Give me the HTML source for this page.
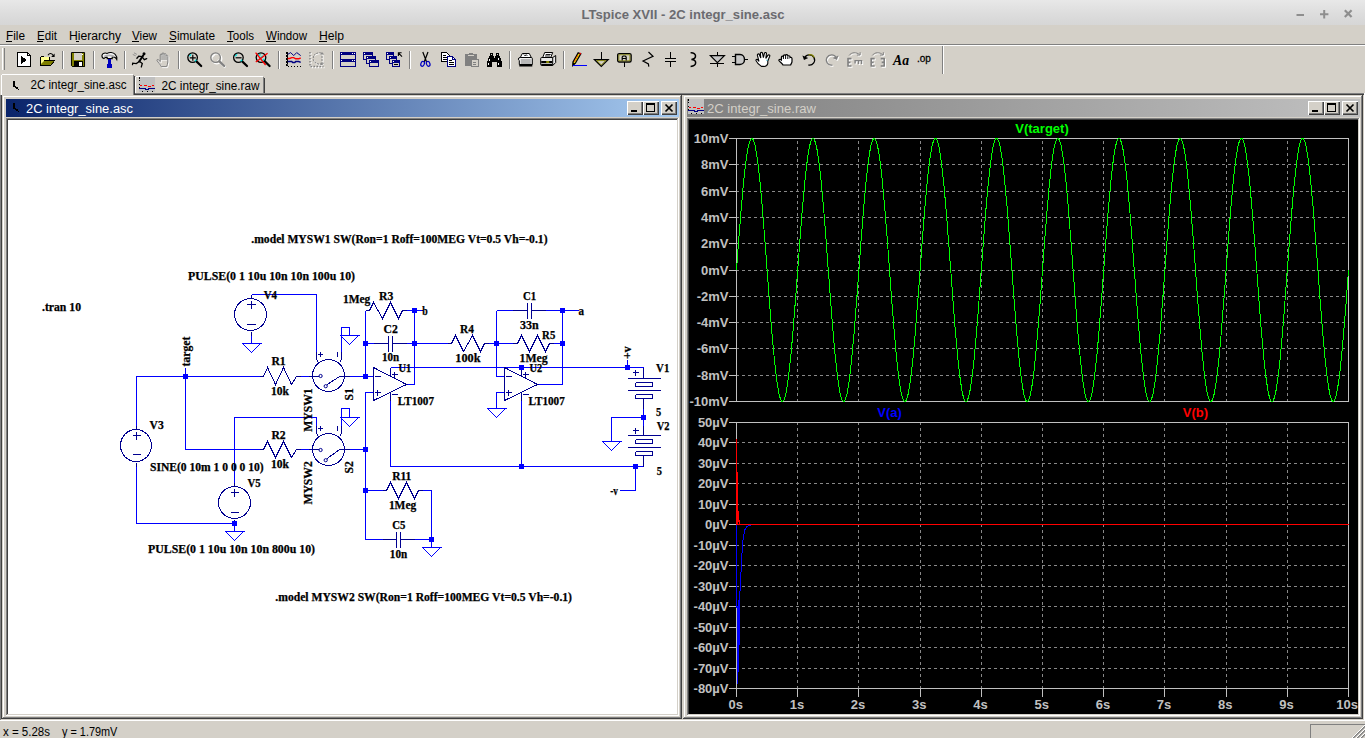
<!DOCTYPE html>
<html><head><meta charset="utf-8"><title>LTspice XVII - 2C integr_sine.asc</title>
<style>
html,body{margin:0;padding:0;}
body{width:1365px;height:738px;overflow:hidden;background:#d4d0c8;font-family:"Liberation Sans",sans-serif;position:relative;}
.abs{position:absolute;}
svg{display:block;overflow:visible;}
</style></head><body>
<div class="abs" style="left:0;top:0;width:1365px;height:25px;background:linear-gradient(#e8e8e8,#e3e3e3 25%,#dcdcdc 60%,#d6d6d6);"></div>
<svg class="abs" style="left:0;top:0" width="1365" height="25"><text x="581.5" y="18.6" font-family="Liberation Sans, sans-serif" font-weight="bold" font-size="13.2" fill="#6b6b70" textLength="203" lengthAdjust="spacingAndGlyphs">LTspice XVII - 2C integr_sine.asc</text><g stroke="#8e8e8e" stroke-width="2" fill="none"><path d="M1296.5 15h7.5"/><path d="M1320 14.2h8.4M1324.2 10v8.4"/><path d="M1344.8 10.2l6.8 6.8M1351.6 10.2l-6.8 6.8" stroke-width="2.2"/></g></svg>
<svg class="abs" style="left:0;top:25px" width="1365" height="20" font-family="Liberation Sans, sans-serif" font-size="12" fill="#000">
<text x="6" y="14.8" textLength="19" lengthAdjust="spacingAndGlyphs">File</text>
<text x="37" y="14.8" textLength="20" lengthAdjust="spacingAndGlyphs">Edit</text>
<text x="69" y="14.8" textLength="52" lengthAdjust="spacingAndGlyphs">Hierarchy</text>
<text x="132" y="14.8" textLength="25" lengthAdjust="spacingAndGlyphs">View</text>
<text x="169" y="14.8" textLength="46" lengthAdjust="spacingAndGlyphs">Simulate</text>
<text x="227" y="14.8" textLength="27" lengthAdjust="spacingAndGlyphs">Tools</text>
<text x="266" y="14.8" textLength="41" lengthAdjust="spacingAndGlyphs">Window</text>
<text x="319" y="14.8" textLength="25" lengthAdjust="spacingAndGlyphs">Help</text>
<rect x="6" y="16" width="6" height="1" fill="#000"/>
<rect x="37" y="16" width="6" height="1" fill="#000"/>
<rect x="76" y="16" width="3" height="1" fill="#000"/>
<rect x="132" y="16" width="7" height="1" fill="#000"/>
<rect x="169" y="16" width="7" height="1" fill="#000"/>
<rect x="227" y="16" width="6" height="1" fill="#000"/>
<rect x="266" y="16" width="10" height="1" fill="#000"/>
<rect x="319" y="16" width="8" height="1" fill="#000"/>
</svg>
<div class="abs" style="left:0px;top:44px;width:1365px;height:1px;background:#808080;"></div>
<div class="abs" style="left:0px;top:45px;width:1365px;height:1px;background:#ffffff;"></div>
<div class="abs" style="left:2px;top:48px;width:1px;height:22px;background:#ffffff;"></div>
<div class="abs" style="left:3px;top:48px;width:1px;height:22px;background:#d4d0c8;"></div>
<div class="abs" style="left:4px;top:48px;width:1px;height:22px;background:#808080;"></div>
<div class="abs" style="left:942px;top:46px;width:1px;height:28px;background:#808080;"></div>
<div class="abs" style="left:943px;top:46px;width:1px;height:28px;background:#ffffff;"></div>
<div class="abs" style="left:1px;top:74px;width:134px;height:21px;background:#d4d0c8;"></div>
<div class="abs" style="left:2px;top:74px;width:131px;height:1px;background:#fff;"></div>
<div class="abs" style="left:1px;top:75px;width:1px;height:20px;background:#fff;"></div>
<div class="abs" style="left:133px;top:75px;width:1px;height:20px;background:#808080;"></div>
<div class="abs" style="left:134px;top:76px;width:1px;height:19px;background:#404040;"></div>
<div class="abs" style="left:136px;top:76px;width:127px;height:1px;background:#fff;"></div>
<div class="abs" style="left:135px;top:77px;width:1px;height:16px;background:#fff;"></div>
<div class="abs" style="left:263px;top:77px;width:1px;height:16px;background:#808080;"></div>
<div class="abs" style="left:264px;top:78px;width:1px;height:15px;background:#404040;"></div>
<svg class="abs" style="left:0;top:70px" width="300" height="28" font-family="Liberation Sans, sans-serif" font-size="12" fill="#000"><text x="30.5" y="18.6" textLength="96" lengthAdjust="spacingAndGlyphs">2C integr_sine.asc</text><text x="161.5" y="19.8" textLength="98" lengthAdjust="spacingAndGlyphs">2C integr_sine.raw</text></svg>
<div class="abs" style="left:135px;top:93px;width:1230px;height:1px;background:#808080;"></div>
<div class="abs" style="left:135px;top:94px;width:1229px;height:1px;background:#404040;"></div>
<div class="abs" style="left:0px;top:95px;width:1px;height:626px;background:#808080;"></div>
<div class="abs" style="left:1px;top:95px;width:1px;height:625px;background:#404040;"></div>
<div class="abs" style="left:1364px;top:93px;width:1px;height:628px;background:#fff;"></div>
<div class="abs" style="left:1363px;top:95px;width:1px;height:625px;background:#d4d0c8;"></div>
<div class="abs" style="left:0px;top:720px;width:1365px;height:1px;background:#fff;"></div>
<div class="abs" style="left:1px;top:719px;width:1363px;height:1px;background:#d4d0c8;"></div>
<div class="abs" style="left:2px;top:95px;width:680px;height:624px;background:#d4d0c8;"></div>
<div class="abs" style="left:2px;top:95px;width:679px;height:1px;background:#d4d0c8;"></div>
<div class="abs" style="left:2px;top:95px;width:1px;height:623px;background:#d4d0c8;"></div>
<div class="abs" style="left:2px;top:718px;width:680px;height:1px;background:#404040;"></div>
<div class="abs" style="left:681px;top:95px;width:1px;height:624px;background:#404040;"></div>
<div class="abs" style="left:3px;top:96px;width:677px;height:1px;background:#fff;"></div>
<div class="abs" style="left:3px;top:96px;width:1px;height:621px;background:#fff;"></div>
<div class="abs" style="left:3px;top:717px;width:678px;height:1px;background:#808080;"></div>
<div class="abs" style="left:680px;top:96px;width:1px;height:622px;background:#808080;"></div>
<div class="abs" style="left:6px;top:99px;width:673px;height:18px;background:linear-gradient(90deg,#0a246a,#a6caf0);"></div>
<div class="abs" style="left:6px;top:118px;width:673px;height:598px;background:#fff;"></div>
<div class="abs" style="left:6px;top:118px;width:673px;height:1px;background:#808080;"></div>
<div class="abs" style="left:6px;top:118px;width:1px;height:598px;background:#808080;"></div>
<div class="abs" style="left:7px;top:119px;width:671px;height:1px;background:#404040;"></div>
<div class="abs" style="left:7px;top:119px;width:1px;height:596px;background:#404040;"></div>
<div class="abs" style="left:6px;top:715px;width:673px;height:1px;background:#fff;"></div>
<div class="abs" style="left:678px;top:118px;width:1px;height:598px;background:#fff;"></div>
<div class="abs" style="left:7px;top:714px;width:671px;height:1px;background:#d4d0c8;"></div>
<div class="abs" style="left:677px;top:119px;width:1px;height:596px;background:#d4d0c8;"></div>
<div class="abs" style="left:661px;top:101px;width:16px;height:14px;background:#d4d0c8;box-shadow:inset 1px 1px 0 #fff, inset -1px -1px 0 #404040, inset -2px -2px 0 #808080;"></div>
<svg class="abs" style="left:661px;top:101px" width="16" height="14"><path d="M4.5 3.5l7 7M11.5 3.5l-7 7" stroke="#000" stroke-width="1.7" fill="none"/></svg>
<div class="abs" style="left:643px;top:101px;width:16px;height:14px;background:#d4d0c8;box-shadow:inset 1px 1px 0 #fff, inset -1px -1px 0 #404040, inset -2px -2px 0 #808080;"></div>
<div class="abs" style="left:646px;top:103px;width:7px;height:6px;border:1px solid #000;border-top-width:2px;"></div>
<div class="abs" style="left:627px;top:101px;width:16px;height:14px;background:#d4d0c8;box-shadow:inset 1px 1px 0 #fff, inset -1px -1px 0 #404040, inset -2px -2px 0 #808080;"></div>
<div class="abs" style="left:631px;top:110px;width:6px;height:2px;background:#000;"></div>
<div class="abs" style="left:683px;top:95px;width:680px;height:624px;background:#d4d0c8;"></div>
<div class="abs" style="left:683px;top:95px;width:679px;height:1px;background:#d4d0c8;"></div>
<div class="abs" style="left:683px;top:95px;width:1px;height:623px;background:#d4d0c8;"></div>
<div class="abs" style="left:683px;top:718px;width:680px;height:1px;background:#404040;"></div>
<div class="abs" style="left:1362px;top:95px;width:1px;height:624px;background:#404040;"></div>
<div class="abs" style="left:684px;top:96px;width:677px;height:1px;background:#fff;"></div>
<div class="abs" style="left:684px;top:96px;width:1px;height:621px;background:#fff;"></div>
<div class="abs" style="left:684px;top:717px;width:678px;height:1px;background:#808080;"></div>
<div class="abs" style="left:1361px;top:96px;width:1px;height:622px;background:#808080;"></div>
<div class="abs" style="left:687px;top:99px;width:673px;height:18px;background:linear-gradient(90deg,#808080,#c0c0c0);"></div>
<div class="abs" style="left:687px;top:118px;width:673px;height:598px;background:#000;"></div>
<div class="abs" style="left:687px;top:118px;width:673px;height:1px;background:#808080;"></div>
<div class="abs" style="left:687px;top:118px;width:1px;height:598px;background:#808080;"></div>
<div class="abs" style="left:688px;top:119px;width:671px;height:1px;background:#404040;"></div>
<div class="abs" style="left:688px;top:119px;width:1px;height:596px;background:#404040;"></div>
<div class="abs" style="left:687px;top:715px;width:673px;height:1px;background:#fff;"></div>
<div class="abs" style="left:1359px;top:118px;width:1px;height:598px;background:#fff;"></div>
<div class="abs" style="left:688px;top:714px;width:671px;height:1px;background:#d4d0c8;"></div>
<div class="abs" style="left:1358px;top:119px;width:1px;height:596px;background:#d4d0c8;"></div>
<div class="abs" style="left:1342px;top:101px;width:16px;height:14px;background:#d4d0c8;box-shadow:inset 1px 1px 0 #fff, inset -1px -1px 0 #404040, inset -2px -2px 0 #808080;"></div>
<svg class="abs" style="left:1342px;top:101px" width="16" height="14"><path d="M4.5 3.5l7 7M11.5 3.5l-7 7" stroke="#000" stroke-width="1.7" fill="none"/></svg>
<div class="abs" style="left:1324px;top:101px;width:16px;height:14px;background:#d4d0c8;box-shadow:inset 1px 1px 0 #fff, inset -1px -1px 0 #404040, inset -2px -2px 0 #808080;"></div>
<div class="abs" style="left:1327px;top:103px;width:7px;height:6px;border:1px solid #000;border-top-width:2px;"></div>
<div class="abs" style="left:1308px;top:101px;width:16px;height:14px;background:#d4d0c8;box-shadow:inset 1px 1px 0 #fff, inset -1px -1px 0 #404040, inset -2px -2px 0 #808080;"></div>
<div class="abs" style="left:1312px;top:110px;width:6px;height:2px;background:#000;"></div>
<svg class="abs" style="left:0;top:95px" width="1365" height="30" font-family="Liberation Sans, sans-serif" font-size="12"><text x="26" y="17.8" fill="#fff" textLength="107" lengthAdjust="spacingAndGlyphs">2C integr_sine.asc</text><text x="707" y="17.8" fill="#d4d0c8" textLength="109" lengthAdjust="spacingAndGlyphs">2C integr_sine.raw</text></svg>
<svg class="abs" style="left:0;top:721px" width="1365" height="17" font-family="Liberation Sans, sans-serif" font-size="12" fill="#000"><text x="3" y="15.3" textLength="47" lengthAdjust="spacingAndGlyphs">x = 5.28s</text><text x="62" y="15.3" textLength="55.3" lengthAdjust="spacingAndGlyphs">y = 1.79mV</text></svg>
<div class="abs" style="left:1310px;top:724px;width:55px;height:1px;background:#808080;"></div>
<div class="abs" style="left:1310px;top:724px;width:1px;height:14px;background:#808080;"></div>
<svg class="abs" style="left:1349px;top:722px" width="16" height="16"><g stroke-width="1"><path d="M4 16L16 4M8 16L16 8M12 16L16 12" stroke="#808080" stroke-width="1.6" fill="none"/><path d="M3 16L16 3M7 16L16 7M11 16L16 11" stroke="#fff" stroke-width="1" fill="none"/></g></svg>
<div class="abs" style="left:62px;top:51px;width:1px;height:18px;background:#808080"></div><div class="abs" style="left:63px;top:51px;width:1px;height:18px;background:#fff"></div>
<div class="abs" style="left:93px;top:51px;width:1px;height:18px;background:#808080"></div><div class="abs" style="left:94px;top:51px;width:1px;height:18px;background:#fff"></div>
<div class="abs" style="left:124px;top:51px;width:1px;height:18px;background:#808080"></div><div class="abs" style="left:125px;top:51px;width:1px;height:18px;background:#fff"></div>
<div class="abs" style="left:178px;top:51px;width:1px;height:18px;background:#808080"></div><div class="abs" style="left:179px;top:51px;width:1px;height:18px;background:#fff"></div>
<div class="abs" style="left:278px;top:51px;width:1px;height:18px;background:#808080"></div><div class="abs" style="left:279px;top:51px;width:1px;height:18px;background:#fff"></div>
<div class="abs" style="left:332px;top:51px;width:1px;height:18px;background:#808080"></div><div class="abs" style="left:333px;top:51px;width:1px;height:18px;background:#fff"></div>
<div class="abs" style="left:409px;top:51px;width:1px;height:18px;background:#808080"></div><div class="abs" style="left:410px;top:51px;width:1px;height:18px;background:#fff"></div>
<div class="abs" style="left:509px;top:51px;width:1px;height:18px;background:#808080"></div><div class="abs" style="left:510px;top:51px;width:1px;height:18px;background:#fff"></div>
<div class="abs" style="left:563px;top:51px;width:1px;height:18px;background:#808080"></div><div class="abs" style="left:564px;top:51px;width:1px;height:18px;background:#fff"></div>
<svg class="abs" style="left:0;top:0" width="960" height="74">
<g transform="translate(17,52)"><g shape-rendering="crispEdges"><path d="M0.5 0.5H10.5L13.5 3.5V14.5H0.5Z" fill="#fff" stroke="#000"/><path d="M10.5 0.5V3.5H13.5" fill="none" stroke="#000"/><path d="M4 4V12L10 8Z" fill="#000"/></g></g>
<g transform="translate(40,52)"><g><path d="M0.5 4.5H3.5L4.5 5.5H9.5V8" fill="#ffff80" stroke="#000" stroke-width="1" shape-rendering="crispEdges"/><rect x="1" y="5" width="8" height="7" fill="#ffff90" shape-rendering="crispEdges"/><path d="M3.5 8.5H14.5L10.5 13.5H0.5V5" fill="none" stroke="#000" shape-rendering="crispEdges"/><path d="M4 9H14L10.3 13H1V12Z" fill="#808000"/><path d="M0.5 4.5V13.5" stroke="#000" shape-rendering="crispEdges"/><path d="M8 3.2C9.5 0.8 12 0.8 13.2 3.6" fill="none" stroke="#000" stroke-width="1.1"/><path d="M14.6 1.6V5H11.2Z" fill="#000"/></g></g>
<g transform="translate(71,52)"><g shape-rendering="crispEdges" transform="scale(0.935,1)"><path d="M0.5 0.5H14.5V14.5H1.5L0.5 13.5Z" fill="#808000" stroke="#000"/><rect x="3" y="1" width="9" height="7" fill="#d4d0c8"/><rect x="12" y="2" width="1" height="1" fill="#fff"/><rect x="3" y="9" width="10" height="6" fill="#000"/><rect x="9" y="10" width="3" height="4" fill="#fff"/></g></g>
<g transform="translate(101.2,52)"><g><path d="M0.8 3.2C1.5 1 4 0.6 6 1.4C8 0 12 0 14 2.4C15.4 4 15.8 6 15.6 7.4C14.6 5.4 13 4.6 11 5V6.6H6V5.2C4.6 5 3.6 5.6 2.6 6.6C1.6 6.2 0.6 4.8 0.8 3.2Z" fill="#f4f4f4" stroke="#000" stroke-width="1.1"/><path d="M3 3.6C6 2 10 2 13 3.6L13 5C10 4 6 4 3 5Z" fill="#b0b0b0"/><rect x="6.5" y="7" width="3.2" height="8.5" fill="#0000c0" shape-rendering="crispEdges"/><rect x="5.6" y="12" width="5" height="3.5" fill="#0000c0" shape-rendering="crispEdges"/></g></g>
<g transform="translate(131.7,52)"><g stroke="#000" fill="none" stroke-linecap="round"><circle cx="12.3" cy="1.8" r="1.5" fill="#000" stroke="none"/><path d="M11.5 3.5L7.5 9.5" stroke-width="2.1"/><path d="M10.8 4.6L7 4.2L5.2 6.2" stroke-width="1.3"/><path d="M10.6 5.2L12.6 7.6L15 6.6" stroke-width="1.3"/><path d="M7.6 9.4L4.6 11.6L1 11.2L0.8 12.6" stroke-width="1.25"/><path d="M8 9.6L10.6 11.4L9.6 15" stroke-width="1.25"/><path d="M1.4 2.6L3.6 3.6M2.6 1L4.8 2.2" stroke="#808080" stroke-width="0.8"/></g></g>
<g transform="translate(155.6,52)"><g fill="none"><path d="M4.6 9.6V3C4.6 1.6 6.4 1.6 6.4 3V2C6.4 0.4 8.4 0.4 8.4 2V2.6C8.4 1.2 10.4 1.2 10.4 2.6V4C10.4 2.8 12.2 2.8 12.2 4.2V10C12.2 12 11.4 13 11 14.6H5.6C5 12.6 2.6 10.6 1.4 8.6C1 7.6 2.2 7 3 7.8Z" stroke="#fff" stroke-width="1" transform="translate(1,1)"/><path d="M6.4 3V8M8.4 2.6V8M10.4 4V8" stroke="#fff" transform="translate(1,1)"/><path d="M4.6 9.6V3C4.6 1.6 6.4 1.6 6.4 3V2C6.4 0.4 8.4 0.4 8.4 2V2.6C8.4 1.2 10.4 1.2 10.4 2.6V4C10.4 2.8 12.2 2.8 12.2 4.2V10C12.2 12 11.4 13 11 14.6H5.6C5 12.6 2.6 10.6 1.4 8.6C1 7.6 2.2 7 3 7.8Z" stroke="#808080" stroke-width="1"/><path d="M6.4 3V8M8.4 2.6V8M10.4 4V8" stroke="#808080"/></g></g>
<g transform="translate(186.8,52)"><g><circle cx="5.8" cy="5.6" r="4.8" fill="none" stroke="#000" stroke-width="1.3"/><path d="M9.6 9.4L14.4 14" stroke="#000" stroke-width="2.2" stroke-linecap="round"/><path d="M2.6 4.2L4.4 2.4M8 9.4L9.6 7.8" stroke="#00e0e0" stroke-width="1.3"/><path d="M3 5.8H9M6 2.8V8.8" stroke="#000" stroke-width="1.2"/></g></g>
<g transform="translate(209.8,52)"><g><g transform="translate(1,1)"><circle cx="6" cy="5.8" r="5" fill="none" stroke="#fff" stroke-width="1.3"/><path d="M10 10L14.6 14.4" stroke="#fff" stroke-width="2.2"/></g><circle cx="5.8" cy="5.6" r="4.8" fill="none" stroke="#808080" stroke-width="1.3"/><path d="M9.6 9.4L14.4 14" stroke="#808080" stroke-width="2.2" stroke-linecap="round"/><path d="M3.4 4.6L5 3M7.6 8.8L9 7.4" stroke="#fff" stroke-width="1"/></g></g>
<g transform="translate(232.6,52)"><g><circle cx="5.8" cy="5.6" r="4.8" fill="none" stroke="#000" stroke-width="1.3"/><path d="M9.6 9.4L14.4 14" stroke="#000" stroke-width="2.2" stroke-linecap="round"/><path d="M2.6 4.2L4.4 2.4M8 9.4L9.6 7.8" stroke="#00e0e0" stroke-width="1.3"/><path d="M3 5.8H9" stroke="#000" stroke-width="1.2"/></g></g>
<g transform="translate(255.2,52)"><g><circle cx="5.8" cy="5.6" r="4.8" fill="none" stroke="#000" stroke-width="1.3"/><path d="M9.6 9.4L14.4 14" stroke="#000" stroke-width="2.2" stroke-linecap="round"/><path d="M3.4 3.6L5.4 2.4M6.6 9.2L9.2 7.2M4 7L8 4" stroke="#00e0e0" stroke-width="1.6"/><path d="M0.4 0.6L10.4 13M12.4 1.2L0.6 10" stroke="#ff0000" stroke-width="1.3"/></g></g>
<g transform="translate(285.7,52)"><g fill="none"><path d="M1.5 0V14.5H15.5" stroke="#000" stroke-width="1.6" stroke-dasharray="1.6 1.4" shape-rendering="crispEdges"/><path d="M1.5 0V14" stroke="#000" stroke-width="1" shape-rendering="crispEdges"/><path d="M2 2.4L5 0.6L8 3.6L11 0.6L15 3.6" stroke="#000080" stroke-width="1"/><path d="M2 6.5H4L6 5.6H8L10 6.8H13L15 6" stroke="#ff0000" stroke-width="1.4"/><path d="M2 9.5H6L7 10.6H9L10 9.6H13L15 10.4" stroke="#000080" stroke-width="1.5"/><path d="M2 12.5H15" stroke="#d4d0c8"/></g></g>
<g transform="translate(308.5,52)"><g fill="none"><g transform="translate(1,1)" stroke="#fff"><path d="M1.5 0V14.5H15" stroke-width="1.4" stroke-dasharray="1.6 1.4"/><path d="M5 3C8 0 13 0.4 13.5 2M13.5 2V12C10 13 5 11 4.6 7" stroke-width="1"/></g><path d="M1.5 0V14.5H15" stroke="#808080" stroke-width="1.4" stroke-dasharray="1.6 1.4"/><path d="M5.4 3.4C8 0.4 12 0.2 13.5 1.6M13.5 1V12.6M13.5 12C10 13 5.4 11 4.8 7.4C4.6 5.6 5 4.4 5.4 3.4" stroke="#808080" stroke-width="1" stroke-dasharray="2 1"/><path d="M12 2.4L13.5 0.6L15 2.4M12 10.8L13.5 12.8L15 10.8" stroke="#808080"/></g></g>
<g transform="translate(340,52)"><g shape-rendering="crispEdges"><rect x="0.5" y="0.5" width="15" height="7" fill="#d4d0c8" stroke="#000080"/><rect x="0" y="0" width="16" height="3" fill="#000080"/><rect x="0.5" y="7.5" width="15" height="7" fill="#d4d0c8" stroke="#000080"/><rect x="0" y="7" width="16" height="3" fill="#000080"/><rect x="1" y="1" width="1" height="1" fill="#fff"/><rect x="12" y="1" width="1" height="1" fill="#fff"/><rect x="14" y="1" width="1" height="1" fill="#fff"/><rect x="1" y="8" width="1" height="1" fill="#fff"/><rect x="12" y="8" width="1" height="1" fill="#fff"/><rect x="14" y="8" width="1" height="1" fill="#fff"/></g></g>
<g transform="translate(363,52)"><g shape-rendering="crispEdges"><rect x="0.5" y="0.5" width="9" height="7" fill="#d4d0c8" stroke="#000080"/><rect x="0" y="0" width="10" height="3" fill="#000080"/><rect x="1" y="1" width="1" height="1" fill="#fff"/><rect x="3.5" y="4.5" width="9" height="7" fill="#d4d0c8" stroke="#000080"/><rect x="3" y="4" width="10" height="3" fill="#000080"/><rect x="4" y="5" width="1" height="1" fill="#fff"/><rect x="6.5" y="8.5" width="9" height="6" fill="#d4d0c8" stroke="#000080"/><rect x="6" y="8" width="10" height="3" fill="#000080"/><rect x="7" y="9" width="1" height="1" fill="#fff"/></g></g>
<g transform="translate(386,52)"><g shape-rendering="crispEdges"><rect x="0.5" y="0.5" width="7" height="7" fill="#d4d0c8" stroke="#000080"/><rect x="0" y="0" width="8" height="3" fill="#000080"/><rect x="1" y="1" width="1" height="1" fill="#fff"/><rect x="3.5" y="4.5" width="7" height="7" fill="#d4d0c8" stroke="#000080"/><rect x="3" y="4" width="8" height="3" fill="#000080"/><rect x="4" y="5" width="1" height="1" fill="#fff"/><rect x="6.5" y="8.5" width="7" height="6" fill="#d4d0c8" stroke="#000080"/><rect x="6" y="8" width="8" height="3" fill="#000080"/><rect x="7" y="9" width="1" height="1" fill="#fff"/><rect x="8" y="12" width="4" height="1" fill="#000"/></g><path d="M15.6 0.8H12.4V4M12.4 0.8L16 4.6" stroke="#000" fill="none" stroke-width="1.1"/></g>
<g transform="translate(417,52)"><g fill="none"><path d="M5.8 0L9.6 10M11 0L7.2 10" stroke="#000" stroke-width="1.2"/><ellipse cx="5.6" cy="11.8" rx="1.7" ry="2.5" transform="rotate(20 5.6 11.8)" stroke="#0000c0" stroke-width="1.2"/><ellipse cx="11.2" cy="11.8" rx="1.7" ry="2.5" transform="rotate(-20 11.2 11.8)" stroke="#0000c0" stroke-width="1.2"/></g></g>
<g transform="translate(441,52)"><g shape-rendering="crispEdges"><path d="M0.5 0.5H5.5L8.5 3.5V9.5H0.5Z" fill="#fff" stroke="#000"/><path d="M2 3H5M2 5H7M2 7H7" stroke="#000"/><path d="M6.5 4.5H11.5L14.5 7.5V14.5H6.5Z" fill="#fff" stroke="#000080"/><path d="M11.5 4.5V7.5H14.5" fill="none" stroke="#000080"/><path d="M8 8H11M8 10H13M8 12H13" stroke="#000"/></g></g>
<g transform="translate(464,52)"><g shape-rendering="crispEdges"><rect x="1" y="2" width="12" height="12" rx="1.5" fill="#808080"/><rect x="5" y="0.5" width="4" height="3" fill="#808080"/><rect x="4" y="3" width="6" height="1" fill="#d4d0c8"/><rect x="7.5" y="7.5" width="7" height="7" fill="#d4d0c8" stroke="#fff"/><rect x="7" y="7" width="7" height="7" fill="none" stroke="#808080"/><path d="M9 10H12M9 12H12" stroke="#808080"/></g></g>
<g transform="translate(487,52)"><g fill="#000" shape-rendering="crispEdges"><rect x="3" y="1" width="3" height="3"/><rect x="9" y="1" width="3" height="3"/><rect x="4" y="2" width="1" height="1" fill="#d4d0c8"/><rect x="10" y="2" width="1" height="1" fill="#d4d0c8"/><path d="M2.5 4H6.5L7 7H8L8.5 4H12.5L15 10V14.5H10V10H5V14.5H0V10Z"/><rect x="6" y="6" width="3" height="4"/><rect x="1" y="11" width="1" height="2" fill="#fff"/><rect x="2" y="7" width="1" height="2" fill="#fff"/><rect x="11" y="11" width="1" height="2" fill="#fff"/><rect x="11" y="6" width="1" height="2" fill="#fff"/></g></g>
<g transform="translate(517.8,52)"><g><path d="M4.5 1.5H11.5L13.5 5.5H2.5Z" fill="#fff" stroke="#000"/><path d="M6 2.5L7.4 4L8.4 2.6L9.6 4" stroke="#000" fill="none" stroke-width="0.8"/><path d="M2.5 5.5H13.5Q14.5 5.5 14.5 6.5V12.5H1.5V8.5Q0.5 8 0.5 7Q0.8 5.5 2.5 5.5Z" fill="#f0f0f0" stroke="#000"/><rect x="3" y="7" width="10" height="5" fill="#b8b8b8"/><path d="M1.5 13.5H14.5" stroke="#000" stroke-width="2"/></g></g>
<g transform="translate(540.2,52)"><g><path d="M4.5 0.5H12.5L10.5 5.5H2.5Z" fill="#fff" stroke="#000"/><path d="M5.5 2.5H10.5M4.8 4H9.8" stroke="#000" stroke-width="0.9"/><path d="M1.5 5.5H12.5L15.5 3.5V10.5L12.5 13.5H1.5Q0.5 13.5 0.5 12.5V6.5Q0.5 5.5 1.5 5.5Z" fill="#e8e8e8" stroke="#000"/><path d="M12.5 5.5V13.5" stroke="#000"/><rect x="1" y="9" width="11" height="2" fill="#000"/><rect x="6" y="9.4" width="3" height="1.2" fill="#e0e000"/><path d="M1 12.5H12" stroke="#000" stroke-width="1.4"/></g></g>
<g transform="translate(572,52)"><g><path d="M6.2 0.8L8.8 1.8L3.4 11.2L0.8 13.4L1 10Z" fill="#f0e000" stroke="#000" stroke-width="1.3"/><path d="M1 10.4L0.8 13.4L3.2 11.4Z" fill="#000"/><path d="M5.6 3.6L2.4 9.6" stroke="#ff0000" stroke-width="1" stroke-dasharray="1.4 1.2"/><circle cx="8.2" cy="1.6" r="0.9" fill="#ff0000"/><path d="M1 13.5H15" stroke="#0000ff" stroke-width="1.4" shape-rendering="crispEdges"/></g></g>
<g transform="translate(593.7,52)"><g fill="none"><path d="M7.5 0V7.5" stroke="#000" shape-rendering="crispEdges"/><path d="M0.8 7.6H14.4L7.6 14.4Z" stroke="#000" stroke-width="1.3" fill="#d4d0c8"/><path d="M3 8.6H12L7.6 13Z" stroke="#808000" stroke-width="0.9"/></g></g>
<g transform="translate(616.7,52)"><g fill="none"><rect x="1" y="1.6" width="13.4" height="8.4" rx="1.5" stroke="#000" stroke-width="1.4"/><rect x="2.2" y="2.8" width="11" height="6" stroke="#808000" stroke-width="0.8"/><path d="M7.5 10V15" stroke="#000" shape-rendering="crispEdges"/><path d="M5.5 8.4V5L6.5 4H8.5L9.5 5V8.4M5.5 6.5H9.5" stroke="#000" stroke-width="1.2"/></g></g>
<g transform="translate(640,52)"><path d="M8.5 0L13 4.4L3 9L8.4 12L8.8 14.6" fill="none" stroke="#000" stroke-width="1.2"/></g>
<g transform="translate(662.6,52)"><path d="M7.5 0V6M7.5 9V15" stroke="#000" shape-rendering="crispEdges" fill="none"/><path d="M2 6.5H13.4M2 9.5H13.4" stroke="#000" stroke-width="1.4" fill="none" shape-rendering="crispEdges"/></g>
<g transform="translate(686,52)"><path d="M4.6 0.8C11 0.4 11 7 5.4 7.4C11 7.6 11.4 14 4.6 14.4" fill="none" stroke="#000" stroke-width="1.5"/></g>
<g transform="translate(709.8,52)"><g fill="none" stroke="#000"><path d="M7.5 0V15" shape-rendering="crispEdges"/><path d="M0.6 3.6H14.6L7.6 10.6Z" fill="#c8c8c8" stroke-width="1.2"/><path d="M0.6 11.5H14.6" stroke-width="1.3" shape-rendering="crispEdges"/></g></g>
<g transform="translate(732,52)"><g fill="none" stroke="#000"><path d="M3.5 2.5H8C14 2.5 14 12.5 8 12.5H3.5Z" fill="#c8c8c8" stroke-width="1.4"/><path d="M0 4.5H3.5M0 10.5H3.5M12.6 7.5H16" shape-rendering="crispEdges"/></g></g>
<g transform="translate(755.4,52)"><g><path d="M3.6 9.4L2 3.4C1.6 1.8 3.6 1.4 4 2.8L5.4 6L5 1.6C5 0 7.2 0 7.2 1.6L8 5.6L9 1.4C9.4 0 11.4 0.4 11 2L10.4 6.4L12.4 3.4C13.2 2.2 15 3.2 14.2 4.6L12.4 9V11.4C12 13.4 10 14.6 8 14.4H6C4 13 1.6 11 0.6 8.6C0.2 7.6 1.6 7 2.4 7.8Z" fill="#fff" stroke="#000" stroke-width="1.1"/><path d="M11.6 7.6V9" stroke="#00a0c0" stroke-width="0.8"/></g></g>
<g transform="translate(778,52)"><g><path d="M3.4 8V5.4C3.4 3.8 5.4 3.8 5.4 5.2V4C5.4 2.4 7.6 2.4 7.6 4V3.6C7.6 2.2 9.8 2.2 9.8 3.8V4.6C9.8 3.4 12 3.4 12 5V5.6C13 5 14 5.6 14 6.8V9.4C14 11 13 11.6 12.6 13H5C4.6 11.6 2.6 10.6 1 8.6C0.4 7.6 2 6.8 3.4 8Z" fill="#fff" stroke="#000" stroke-width="1.2"/><path d="M5.4 5V7M7.6 4V7M9.8 4.6V7" stroke="#000"/></g></g>
<g transform="translate(801.6,52)"><g fill="none"><path d="M3.4 5.4C5 2 10.4 2.2 12.4 5.6C14.4 9.6 11 14 6.8 13" stroke="#000" stroke-width="1.3"/><path d="M7 2.8C9.6 2.2 11.6 3.4 12.6 5.4" stroke="#808000" stroke-width="1.2"/><path d="M0.8 3.4L2.4 8L6.6 6Z" fill="#000"/></g></g>
<g transform="translate(824.3,52)"><g fill="none"><g transform="translate(1,1)"><path d="M11.6 5.4C10 2 4.6 2.2 2.6 5.6C0.6 9.6 4 14 8.2 13" stroke="#fff" stroke-width="1.2"/><path d="M14.2 3.4L12.6 8L8.4 6Z" fill="#fff"/></g><path d="M11.6 5.4C10 2 4.6 2.2 2.6 5.6C0.6 9.6 4 14 8.2 13" stroke="#808080" stroke-width="1.2"/><path d="M14.2 3.4L12.6 8L8.4 6Z" fill="#808080"/></g></g>
<g transform="translate(846.5,52)"><g fill="none"><g transform="translate(1,1)" stroke="#fff" stroke-width="1.3"><path d="M1.5 6V14.5M1 6.6H5M1 10.4H4M1 14H5" stroke-width="1.6"/><path d="M8 8.6H15.5M8.6 8V11.4M12 8V12M15 8V12" stroke-width="1.4"/><path d="M2.6 3.4C5 0 10 0 13 2.6" stroke-width="1"/><path d="M10.4 3H13.6V0.2" stroke-width="1"/></g><g stroke="#808080" stroke-width="1.3"><path d="M1.5 6V14.5M1 6.6H5M1 10.4H4M1 14H5" stroke-width="1.6"/><path d="M8 8.6H15.5M8.6 8V11.4M12 8V12M15 8V12" stroke-width="1.4"/><path d="M2.6 3.4C5 0 10 0 13 2.6" stroke-width="1"/><path d="M10.4 3H13.6V0.2" stroke-width="1"/></g></g></g>
<g transform="translate(869.7,52)"><g fill="none"><g transform="translate(1,1)" stroke="#fff" stroke-width="1.3"><path d="M1.5 6V14.5M1 6.6H5M1 10.4H4M1 14H5" stroke-width="1.6"/><path d="M14.5 6V14.5M15 6.6H11M15 10.4H12M15 14H11" stroke-width="1.6"/><path d="M2.6 3.4C5 0 10 0 13 2.6" stroke-width="1"/><path d="M10.4 3H13.6V0.2" stroke-width="1"/></g><g stroke="#808080" stroke-width="1.3"><path d="M1.5 6V14.5M1 6.6H5M1 10.4H4M1 14H5" stroke-width="1.6"/><path d="M14.5 6V14.5M15 6.6H11M15 10.4H12M15 14H11" stroke-width="1.6"/><path d="M2.6 3.4C5 0 10 0 13 2.6" stroke-width="1"/><path d="M10.4 3H13.6V0.2" stroke-width="1"/></g></g></g>
<g transform="translate(894,52)"><text x="-1" y="12.6" font-family="Liberation Serif, serif" font-style="italic" font-weight="bold" font-size="15.5" fill="#000" textLength="16" lengthAdjust="spacingAndGlyphs">Aa</text></g>
<g transform="translate(916.3,52)"><text x="0.6" y="10.4" font-family="Liberation Sans, sans-serif" font-size="11.5" fill="#000" textLength="14" lengthAdjust="spacingAndGlyphs" stroke="#000" stroke-width="0.3">.op</text></g>
</svg>
<svg class="abs" style="left:0;top:0" width="1365" height="120">
<g transform="translate(13,81)" fill="#000" shape-rendering="crispEdges"><rect x="0" y="0" width="2" height="6"/><rect x="2" y="5" width="1" height="2"/><rect x="3" y="6" width="2" height="2"/><rect x="5" y="8" width="1" height="1"/></g>
<g transform="translate(13,103)" fill="#000" shape-rendering="crispEdges"><rect x="0" y="0" width="2" height="6"/><rect x="2" y="5" width="1" height="2"/><rect x="3" y="6" width="2" height="2"/><rect x="5" y="8" width="1" height="1"/></g>
<g transform="translate(139,77)" shape-rendering="crispEdges"><rect x="0" y="0" width="16" height="15" fill="#c0c0c0"/><path d="M0.5 0V2M0.5 3V4M0.5 7V8M0.5 10V11" stroke="#000"/><path d="M3 14.5H4M8 14.5H9M13 14.5H14" stroke="#000"/><path d="M1 8.5H3M5 8.5H8M9 9.5H12M13 8.5H15" stroke="#ff0000"/><path d="M0 11.5H6L7 12.5H9L10 11.5H16" stroke="#000080" fill="none"/></g>
<g transform="translate(688,99)" shape-rendering="crispEdges"><rect x="0" y="0" width="16" height="15" fill="#c0c0c0"/><path d="M0.5 0V2M0.5 3V4M0.5 7V8M0.5 10V11" stroke="#000"/><path d="M3 14.5H4M8 14.5H9M13 14.5H14" stroke="#000"/><path d="M1 8.5H3M5 8.5H8M9 9.5H12M13 8.5H15" stroke="#ff0000"/><path d="M0 11.5H6L7 12.5H9L10 11.5H16" stroke="#000080" fill="none"/></g>
</svg>
<svg class="abs" style="left:0;top:0" width="1365" height="738" shape-rendering="crispEdges" fill="none">
<path d="M136.5 425.5 L136.5 376.5 L259.5 376.5M185.5 367.5 L185.5 449.5 L259.5 449.5M300.5 376.5 L308.5 376.5M349.5 376.5 L373.5 376.5M300.5 449.5 L308.5 449.5M349.5 449.5 L365.5 449.5M365.5 376.5 L365.5 310.5M406.5 310.5 L422.5 310.5M414.5 310.5 L414.5 384.5 L406.5 384.5M365.5 343.5 L373.5 343.5M406.5 343.5 L447.5 343.5M488.5 343.5 L512.5 343.5M553.5 343.5 L562.5 343.5M496.5 310.5 L496.5 376.5 L504.5 376.5M496.5 310.5 L512.5 310.5M545.5 310.5 L578.5 310.5M562.5 310.5 L562.5 384.5 L537.5 384.5M504.5 392.5 L496.5 392.5 L496.5 408.5M373.5 392.5 L365.5 392.5 L365.5 539.5 L382.5 539.5M414.5 539.5 L431.5 539.5M365.5 490.5 L382.5 490.5M422.5 490.5 L431.5 490.5 L431.5 547.5M390.5 367.5 L643.5 367.5M627.5 367.5 L627.5 359.5M390.5 400.5 L390.5 466.5 L643.5 466.5M521.5 400.5 L521.5 466.5M635.5 466.5 L635.5 490.5 L619.5 490.5M643.5 408.5 L643.5 425.5M643.5 417.5 L611.5 417.5 L611.5 441.5M136.5 466.5 L136.5 523.5 L234.5 523.5M234.5 523.5 L234.5 531.5M251.5 294.5 L316.5 294.5 L316.5 351.5M251.5 335.5 L251.5 343.5M234.5 482.5 L234.5 417.5 L316.5 417.5 L316.5 425.5M341.5 351.5 L341.5 327.5 L349.5 327.5 L349.5 335.5M341.5 425.5 L341.5 408.5 L349.5 408.5 L349.5 417.5M242.5 343.5H261.5M260.5 343.5L251.5 352.5L242.5 343.5M340.5 335.5H359.5M358.5 335.5L349.5 344.5L340.5 335.5M340.5 417.5H359.5M358.5 417.5L349.5 426.5L340.5 417.5M487.5 408.5H506.5M505.5 408.5L496.5 417.5L487.5 408.5M422.5 547.5H441.5M440.5 547.5L431.5 556.5L422.5 547.5M602.5 441.5H621.5M620.5 441.5L611.5 450.5L602.5 441.5M225.5 531.5H244.5M243.5 531.5L234.5 540.5L225.5 531.5" stroke="#0000ff" stroke-width="1"/>
<path d="M259.5 376.5 L263.5 376.5 L267.5 367.5 L275.5 384.5 L283.5 367.5 L291.5 384.5 L296.5 376.5 L300.5 376.5M259.5 449.5 L263.5 449.5 L267.5 441.5 L275.5 457.5 L283.5 441.5 L291.5 457.5 L296.5 449.5 L300.5 449.5M365.5 310.5 L369.5 310.5 L373.5 302.5 L382.5 318.5 L390.5 302.5 L398.5 318.5 L402.5 310.5 L406.5 310.5M447.5 343.5 L451.5 343.5 L455.5 335.5 L463.5 351.5 L472.5 335.5 L480.5 351.5 L484.5 343.5 L488.5 343.5M512.5 343.5 L517.5 343.5 L521.5 335.5 L529.5 351.5 L537.5 335.5 L545.5 351.5 L549.5 343.5 L553.5 343.5M382.5 490.5 L386.5 490.5 L390.5 482.5 L398.5 498.5 L406.5 482.5 L414.5 498.5 L418.5 490.5 L422.5 490.5M373.5 343.5 L388.5 343.5M392.5 343.5 L406.5 343.5M388.5 335.5 L388.5 351.5M392.5 335.5 L392.5 351.5M512.5 310.5 L527.5 310.5M531.5 310.5 L545.5 310.5M527.5 302.5 L527.5 318.5M531.5 302.5 L531.5 318.5M382.5 539.5 L396.5 539.5M400.5 539.5 L414.5 539.5M396.5 531.5 L396.5 547.5M400.5 531.5 L400.5 547.5M136.5 425.5 L136.5 429.5M136.5 462.5 L136.5 466.5M132.5 435.5 L140.5 435.5M136.5 431.5 L136.5 439.5M132.5 454.5 L140.5 454.5M251.5 294.5 L251.5 298.5M251.5 331.5 L251.5 335.5M246.5 304.5 L255.5 304.5M251.5 300.5 L251.5 308.5M246.5 324.5 L255.5 324.5M234.5 482.5 L234.5 486.5M234.5 519.5 L234.5 523.5M230.5 492.5 L238.5 492.5M234.5 488.5 L234.5 496.5M230.5 512.5 L238.5 512.5M643.5 367.5 L643.5 378.5M627.5 378.5 L660.5 378.5M635.5 382.5 L652.5 382.5 L652.5 386.5 L635.5 386.5 L635.5 382.5M627.5 390.5 L660.5 390.5M635.5 394.5 L652.5 394.5 L652.5 398.5 L635.5 398.5 L635.5 394.5M643.5 398.5 L643.5 408.5M632.5 372.5H638.5M635.5 369.5V375.5M643.5 425.5 L643.5 435.5M627.5 435.5 L660.5 435.5M635.5 439.5 L652.5 439.5 L652.5 443.5 L635.5 443.5 L635.5 439.5M627.5 447.5 L660.5 447.5M635.5 451.5 L652.5 451.5 L652.5 455.5 L635.5 455.5 L635.5 451.5M643.5 455.5 L643.5 466.5M632.5 430.5H638.5M635.5 427.5V433.5M373.5 367.5 L406.5 384.5 L373.5 400.5 L373.5 367.5M390.5 367.5 L390.5 376.5M390.5 400.5 L390.5 392.5M375.0 376.5h6M375.0 392.5h6M377.5 389.5v6M392.0 374.5h6M394.5 371.5v6M392.0 394.5h6M504.5 367.5 L537.5 384.5 L504.5 400.5 L504.5 367.5M521.5 367.5 L521.5 376.5M521.5 400.5 L521.5 392.5M506.0 376.5h6M506.0 392.5h6M508.5 389.5v6M523.0 374.5h6M525.5 371.5v6M523.0 394.5h6M308.5 376.5H319.1M327.0 384.7L339.5 376.5H349.5M316.5 351.5V359.0l1.5 2.5M341.5 351.5V359.0l-1.5 2.5M318.0 354.0h5M320.5 351.5v5M337.5 351.5v5M308.5 449.5H319.1M327.0 458.7L339.5 449.5H349.5M316.5 425.5V433.0l1.5 2.5M341.5 425.5V433.0l-1.5 2.5M318.0 428.0h5M320.5 425.5v5M337.5 425.5v5" stroke="#000090" stroke-width="1"/>
<ellipse cx="136.0" cy="445.5" rx="15.5" ry="16.0" stroke="#000090" stroke-width="1"/>
<ellipse cx="250.5" cy="314.5" rx="16.0" ry="16.0" stroke="#000090" stroke-width="1"/>
<ellipse cx="234.5" cy="502.5" rx="16.0" ry="16.0" stroke="#000090" stroke-width="1"/>
<ellipse cx="328.5" cy="375.5" rx="16.0" ry="16.0" stroke="#000090" stroke-width="1"/>
<ellipse cx="320.6" cy="376.0" rx="1.6" ry="1.6" stroke="#000090" stroke-width="1" shape-rendering="geometricPrecision"/>
<ellipse cx="325.7" cy="386.2" rx="1.6" ry="1.6" stroke="#000090" stroke-width="1" shape-rendering="geometricPrecision"/>
<ellipse cx="328.5" cy="449.5" rx="16.0" ry="16.0" stroke="#000090" stroke-width="1"/>
<ellipse cx="320.6" cy="450.0" rx="1.6" ry="1.6" stroke="#000090" stroke-width="1" shape-rendering="geometricPrecision"/>
<ellipse cx="325.7" cy="460.2" rx="1.6" ry="1.6" stroke="#000090" stroke-width="1" shape-rendering="geometricPrecision"/>
<g fill="#0000ff"><rect x="183.0" y="374.0" width="5" height="5"/><rect x="363.0" y="374.0" width="5" height="5"/><rect x="363.0" y="341.0" width="5" height="5"/><rect x="412.0" y="341.0" width="5" height="5"/><rect x="412.0" y="308.0" width="5" height="5"/><rect x="494.0" y="341.0" width="5" height="5"/><rect x="560.0" y="341.0" width="5" height="5"/><rect x="560.0" y="308.0" width="5" height="5"/><rect x="519.0" y="365.0" width="5" height="5"/><rect x="625.0" y="365.0" width="5" height="5"/><rect x="519.0" y="464.0" width="5" height="5"/><rect x="633.0" y="464.0" width="5" height="5"/><rect x="641.0" y="415.0" width="5" height="5"/><rect x="363.0" y="447.0" width="5" height="5"/><rect x="363.0" y="488.0" width="5" height="5"/><rect x="429.0" y="537.0" width="5" height="5"/><rect x="232.0" y="521.0" width="5" height="5"/></g>
</svg>
<svg class="abs" style="left:0;top:0" width="1365" height="738" font-family="Liberation Serif, serif" font-weight="bold" font-size="11.7" fill="#000" stroke="#000" stroke-width="0.25"><text x="251.3" y="242.6" textLength="296.2" lengthAdjust="spacingAndGlyphs">.model MYSW1 SW(Ron=1 Roff=100MEG Vt=0.5 Vh=-0.1)</text><text x="275.3" y="601" textLength="296.7" lengthAdjust="spacingAndGlyphs">.model MYSW2 SW(Ron=1 Roff=100MEG Vt=0.5 Vh=-0.1)</text><text x="188" y="280" textLength="167.0" lengthAdjust="spacingAndGlyphs">PULSE(0 1 10u 10n 10n 100u 10)</text><text x="148" y="552.8" textLength="167.0" lengthAdjust="spacingAndGlyphs">PULSE(0 1 10u 10n 10n 800u 10)</text><text x="150" y="471" textLength="113.7" lengthAdjust="spacingAndGlyphs">SINE(0 10m 1 0 0 0 10)</text><text x="42" y="311" textLength="39.0" lengthAdjust="spacingAndGlyphs">.tran 10</text><text x="263.7" y="298.7" textLength="13.3" lengthAdjust="spacingAndGlyphs">V4</text><text x="149.5" y="429.4" textLength="14.2" lengthAdjust="spacingAndGlyphs">V3</text><text x="247.4" y="486.9" textLength="13.2" lengthAdjust="spacingAndGlyphs">V5</text><text x="342.9" y="303" textLength="27.4" lengthAdjust="spacingAndGlyphs">1Meg</text><text x="379.1" y="299.8" textLength="14.3" lengthAdjust="spacingAndGlyphs">R3</text><text x="383.5" y="332.7" textLength="14.3" lengthAdjust="spacingAndGlyphs">C2</text><text x="382" y="361.4" textLength="17.2" lengthAdjust="spacingAndGlyphs">10n</text><text x="271.4" y="364.6" textLength="14.3" lengthAdjust="spacingAndGlyphs">R1</text><text x="271" y="395.4" textLength="18.0" lengthAdjust="spacingAndGlyphs">10k</text><text x="271.4" y="438.6" textLength="14.3" lengthAdjust="spacingAndGlyphs">R2</text><text x="271" y="468" textLength="18.0" lengthAdjust="spacingAndGlyphs">10k</text><text x="422.3" y="314.8" textLength="5.5" lengthAdjust="spacingAndGlyphs">b</text><text x="578.4" y="314.8" textLength="5.5" lengthAdjust="spacingAndGlyphs">a</text><text x="460.1" y="332.8" textLength="13.9" lengthAdjust="spacingAndGlyphs">R4</text><text x="455.3" y="361.9" textLength="25.2" lengthAdjust="spacingAndGlyphs">100k</text><text x="523" y="299.9" textLength="13.2" lengthAdjust="spacingAndGlyphs">C1</text><text x="520.1" y="328.5" textLength="18.7" lengthAdjust="spacingAndGlyphs">33n</text><text x="542.1" y="339" textLength="13.2" lengthAdjust="spacingAndGlyphs">R5</text><text x="519.5" y="361.9" textLength="28.1" lengthAdjust="spacingAndGlyphs">1Meg</text><text x="398.5" y="371.6" textLength="12.7" lengthAdjust="spacingAndGlyphs">U1</text><text x="529.4" y="371.6" textLength="12.7" lengthAdjust="spacingAndGlyphs">U2</text><text x="397.8" y="404.6" textLength="36.2" lengthAdjust="spacingAndGlyphs">LT1007</text><text x="528.6" y="404.6" textLength="36.2" lengthAdjust="spacingAndGlyphs">LT1007</text><text x="392.2" y="479.9" textLength="19.1" lengthAdjust="spacingAndGlyphs">R11</text><text x="388.9" y="508.5" textLength="27.3" lengthAdjust="spacingAndGlyphs">1Meg</text><text x="392.2" y="528.9" textLength="13.2" lengthAdjust="spacingAndGlyphs">C5</text><text x="389.8" y="557.5" textLength="17.4" lengthAdjust="spacingAndGlyphs">10n</text><text x="610.2" y="494.8" textLength="7.7" lengthAdjust="spacingAndGlyphs">-v</text><text x="656.1" y="371.7" textLength="13.2" lengthAdjust="spacingAndGlyphs">V1</text><text x="656" y="416.3" textLength="5.2" lengthAdjust="spacingAndGlyphs">5</text><text x="656.8" y="430.1" textLength="12.8" lengthAdjust="spacingAndGlyphs">V2</text><text x="656.8" y="474.5" textLength="5.2" lengthAdjust="spacingAndGlyphs">5</text><text transform="translate(189.5,366.5) rotate(-90)">target</text><text transform="translate(311.7,431.8) rotate(-90)">MYSW1</text><text transform="translate(353,400.6) rotate(-90)">S1</text><text transform="translate(311.7,504.6) rotate(-90)">MYSW2</text><text transform="translate(353,473.4) rotate(-90)">S2</text><text transform="translate(631,359) rotate(-90)">+v</text></svg>
<svg class="abs" style="left:0;top:0" width="1365" height="738" shape-rendering="crispEdges">
<path d="M736 164.5H1348M736 191.5H1348M736 217.5H1348M736 243.5H1348M736 270.5H1348M736 296.5H1348M736 322.5H1348M736 348.5H1348M736 375.5H1348M736 442.5H1348M736 463.5H1348M736 483.5H1348M736 504.5H1348M736 524.5H1348M736 545.5H1348M736 565.5H1348M736 586.5H1348M736 606.5H1348M736 627.5H1348M736 647.5H1348M736 668.5H1348" stroke="#888888" stroke-width="1" stroke-dasharray="3 3" fill="none"/>
<path d="M797.5 141V401M797.5 422V688M858.5 141V401M858.5 422V688M920.5 141V401M920.5 422V688M981.5 141V401M981.5 422V688M1042.5 141V401M1042.5 422V688M1103.5 141V401M1103.5 422V688M1164.5 141V401M1164.5 422V688M1226.5 141V401M1226.5 422V688M1287.5 141V401M1287.5 422V688" stroke="#888888" stroke-width="1" stroke-dasharray="3 3" fill="none"/>
<path d="M736.5 138.5H1348.5V401.5H736.5ZM736.5 422.5H1348.5V688.5H736.5ZM729.0 138.5H736.5M729.0 164.5H736.5M729.0 191.5H736.5M729.0 217.5H736.5M729.0 243.5H736.5M729.0 270.5H736.5M729.0 296.5H736.5M729.0 322.5H736.5M729.0 348.5H736.5M729.0 375.5H736.5M729.0 401.5H736.5M729.0 422.5H736.5M729.0 442.5H736.5M729.0 463.5H736.5M729.0 483.5H736.5M729.0 504.5H736.5M729.0 524.5H736.5M729.0 545.5H736.5M729.0 565.5H736.5M729.0 586.5H736.5M729.0 606.5H736.5M729.0 627.5H736.5M729.0 647.5H736.5M729.0 668.5H736.5M729.0 688.5H736.5M736.5 688.5V696.5M797.5 688.5V696.5M858.5 688.5V696.5M920.5 688.5V696.5M981.5 688.5V696.5M1042.5 688.5V696.5M1103.5 688.5V696.5M1164.5 688.5V696.5M1226.5 688.5V696.5M1287.5 688.5V696.5M1348.5 688.5V696.5" stroke="#c0c0c0" stroke-width="1" fill="none"/>
<polyline points="736.5,270.0 736.8,266.6 737.0,263.1 737.3,259.7 737.5,256.3 737.8,252.8 738.0,249.4 738.3,246.0 738.5,242.7 738.8,239.3 739.0,236.0 739.3,232.7 739.6,229.4 739.8,226.1 740.1,222.9 740.3,219.7 740.6,216.5 740.8,213.4 741.1,210.3 741.3,207.3 741.6,204.2 741.9,201.3 742.1,198.4 742.4,195.5 742.6,192.7 742.9,189.9 743.1,187.2 743.4,184.6 743.6,182.0 743.9,179.5 744.1,177.0 744.4,174.6 744.7,172.3 744.9,170.0 745.2,167.8 745.4,165.7 745.7,163.6 745.9,161.6 746.2,159.7 746.4,157.9 746.7,156.1 747.0,154.4 747.2,152.8 747.5,151.3 747.7,149.9 748.0,148.5 748.2,147.2 748.5,146.0 748.7,144.9 749.0,143.9 749.2,143.0 749.5,142.1 749.8,141.4 750.0,140.7 750.3,140.1 750.5,139.6 750.8,139.2 751.0,138.9 751.3,138.7 751.5,138.5 751.8,138.5 752.1,138.5 752.3,138.7 752.6,138.9 752.8,139.2 753.1,139.6 753.3,140.1 753.6,140.7 753.8,141.4 754.1,142.1 754.4,143.0 754.6,143.9 754.9,144.9 755.1,146.0 755.4,147.2 755.6,148.5 755.9,149.9 756.1,151.3 756.4,152.8 756.6,154.4 756.9,156.1 757.2,157.9 757.4,159.7 757.7,161.6 757.9,163.6 758.2,165.7 758.4,167.8 758.7,170.0 758.9,172.3 759.2,174.6 759.5,177.0 759.7,179.5 760.0,182.0 760.2,184.6 760.5,187.2 760.7,189.9 761.0,192.7 761.2,195.5 761.5,198.4 761.7,201.3 762.0,204.2 762.3,207.3 762.5,210.3 762.8,213.4 763.0,216.5 763.3,219.7 763.5,222.9 763.8,226.1 764.0,229.4 764.3,232.7 764.5,236.0 764.8,239.3 765.1,242.7 765.3,246.0 765.6,249.4 765.8,252.8 766.1,256.3 766.3,259.7 766.6,263.1 766.8,266.6 767.1,270.0 767.4,273.4 767.6,276.9 767.9,280.3 768.1,283.7 768.4,287.2 768.6,290.6 768.9,294.0 769.1,297.3 769.4,300.7 769.6,304.0 769.9,307.3 770.2,310.6 770.4,313.9 770.7,317.1 770.9,320.3 771.2,323.5 771.4,326.6 771.7,329.7 771.9,332.7 772.2,335.8 772.5,338.7 772.7,341.6 773.0,344.5 773.2,347.3 773.5,350.1 773.7,352.8 774.0,355.4 774.2,358.0 774.5,360.5 774.8,363.0 775.0,365.4 775.3,367.7 775.5,370.0 775.8,372.2 776.0,374.3 776.3,376.4 776.5,378.4 776.8,380.3 777.0,382.1 777.3,383.9 777.6,385.6 777.8,387.2 778.1,388.7 778.3,390.1 778.6,391.5 778.8,392.8 779.1,394.0 779.3,395.1 779.6,396.1 779.9,397.0 780.1,397.9 780.4,398.6 780.6,399.3 780.9,399.9 781.1,400.4 781.4,400.8 781.6,401.1 781.9,401.3 782.1,401.5 782.4,401.5 782.7,401.5 782.9,401.3 783.2,401.1 783.4,400.8 783.7,400.4 783.9,399.9 784.2,399.3 784.4,398.6 784.7,397.9 785.0,397.0 785.2,396.1 785.5,395.1 785.7,394.0 786.0,392.8 786.2,391.5 786.5,390.1 786.7,388.7 787.0,387.2 787.2,385.6 787.5,383.9 787.8,382.1 788.0,380.3 788.3,378.4 788.5,376.4 788.8,374.3 789.0,372.2 789.3,370.0 789.5,367.7 789.8,365.4 790.0,363.0 790.3,360.5 790.6,358.0 790.8,355.4 791.1,352.8 791.3,350.1 791.6,347.3 791.8,344.5 792.1,341.6 792.3,338.7 792.6,335.8 792.9,332.7 793.1,329.7 793.4,326.6 793.6,323.5 793.9,320.3 794.1,317.1 794.4,313.9 794.6,310.6 794.9,307.3 795.1,304.0 795.4,300.7 795.7,297.3 795.9,294.0 796.2,290.6 796.4,287.2 796.7,283.7 796.9,280.3 797.2,276.9 797.4,273.4 797.7,270.0 798.0,266.6 798.2,263.1 798.5,259.7 798.7,256.3 799.0,252.8 799.2,249.4 799.5,246.0 799.7,242.7 800.0,239.3 800.2,236.0 800.5,232.7 800.8,229.4 801.0,226.1 801.3,222.9 801.5,219.7 801.8,216.5 802.0,213.4 802.3,210.3 802.5,207.3 802.8,204.3 803.1,201.3 803.3,198.4 803.6,195.5 803.8,192.7 804.1,189.9 804.3,187.2 804.6,184.6 804.8,182.0 805.1,179.5 805.4,177.0 805.6,174.6 805.9,172.3 806.1,170.0 806.4,167.8 806.6,165.7 806.9,163.6 807.1,161.6 807.4,159.7 807.6,157.9 807.9,156.1 808.2,154.4 808.4,152.8 808.7,151.3 808.9,149.9 809.2,148.5 809.4,147.2 809.7,146.0 809.9,144.9 810.2,143.9 810.5,143.0 810.7,142.1 811.0,141.4 811.2,140.7 811.5,140.1 811.7,139.6 812.0,139.2 812.2,138.9 812.5,138.7 812.7,138.5 813.0,138.5 813.3,138.5 813.5,138.7 813.8,138.9 814.0,139.2 814.3,139.6 814.5,140.1 814.8,140.7 815.0,141.4 815.3,142.1 815.5,143.0 815.8,143.9 816.1,144.9 816.3,146.0 816.6,147.2 816.8,148.5 817.1,149.9 817.3,151.3 817.6,152.8 817.8,154.4 818.1,156.1 818.4,157.9 818.6,159.7 818.9,161.6 819.1,163.6 819.4,165.7 819.6,167.8 819.9,170.0 820.1,172.3 820.4,174.6 820.6,177.0 820.9,179.5 821.2,182.0 821.4,184.6 821.7,187.2 821.9,189.9 822.2,192.7 822.4,195.5 822.7,198.4 822.9,201.3 823.2,204.3 823.5,207.3 823.7,210.3 824.0,213.4 824.2,216.5 824.5,219.7 824.7,222.9 825.0,226.1 825.2,229.4 825.5,232.7 825.8,236.0 826.0,239.3 826.3,242.7 826.5,246.0 826.8,249.4 827.0,252.8 827.3,256.3 827.5,259.7 827.8,263.1 828.0,266.6 828.3,270.0 828.6,273.4 828.8,276.9 829.1,280.3 829.3,283.7 829.6,287.2 829.8,290.6 830.1,294.0 830.3,297.3 830.6,300.7 830.9,304.0 831.1,307.3 831.4,310.6 831.6,313.9 831.9,317.1 832.1,320.3 832.4,323.5 832.6,326.6 832.9,329.7 833.1,332.7 833.4,335.7 833.7,338.7 833.9,341.6 834.2,344.5 834.4,347.3 834.7,350.1 834.9,352.8 835.2,355.4 835.4,358.0 835.7,360.5 836.0,363.0 836.2,365.4 836.5,367.7 836.7,370.0 837.0,372.2 837.2,374.3 837.5,376.4 837.7,378.4 838.0,380.3 838.2,382.1 838.5,383.9 838.8,385.6 839.0,387.2 839.3,388.7 839.5,390.1 839.8,391.5 840.0,392.8 840.3,394.0 840.5,395.1 840.8,396.1 841.0,397.0 841.3,397.9 841.6,398.6 841.8,399.3 842.1,399.9 842.3,400.4 842.6,400.8 842.8,401.1 843.1,401.3 843.3,401.5 843.6,401.5 843.9,401.5 844.1,401.3 844.4,401.1 844.6,400.8 844.9,400.4 845.1,399.9 845.4,399.3 845.6,398.6 845.9,397.9 846.1,397.0 846.4,396.1 846.7,395.1 846.9,394.0 847.2,392.8 847.4,391.5 847.7,390.1 847.9,388.7 848.2,387.2 848.4,385.6 848.7,383.9 849.0,382.1 849.2,380.3 849.5,378.4 849.7,376.4 850.0,374.3 850.2,372.2 850.5,370.0 850.7,367.7 851.0,365.4 851.2,363.0 851.5,360.5 851.8,358.0 852.0,355.4 852.3,352.8 852.5,350.1 852.8,347.3 853.0,344.5 853.3,341.6 853.5,338.7 853.8,335.8 854.1,332.7 854.3,329.7 854.6,326.6 854.8,323.5 855.1,320.3 855.3,317.1 855.6,313.9 855.8,310.6 856.1,307.3 856.4,304.0 856.6,300.7 856.9,297.3 857.1,294.0 857.4,290.6 857.6,287.2 857.9,283.7 858.1,280.3 858.4,276.9 858.6,273.4 858.9,270.0 859.2,266.6 859.4,263.1 859.7,259.7 859.9,256.3 860.2,252.8 860.4,249.4 860.7,246.0 860.9,242.7 861.2,239.3 861.5,236.0 861.7,232.7 862.0,229.4 862.2,226.1 862.5,222.9 862.7,219.7 863.0,216.5 863.2,213.4 863.5,210.3 863.7,207.3 864.0,204.2 864.3,201.3 864.5,198.4 864.8,195.5 865.0,192.7 865.3,189.9 865.5,187.2 865.8,184.6 866.0,182.0 866.3,179.5 866.5,177.0 866.8,174.6 867.1,172.3 867.3,170.0 867.6,167.8 867.8,165.7 868.1,163.6 868.3,161.6 868.6,159.7 868.8,157.9 869.1,156.1 869.4,154.4 869.6,152.8 869.9,151.3 870.1,149.9 870.4,148.5 870.6,147.2 870.9,146.0 871.1,144.9 871.4,143.9 871.6,143.0 871.9,142.1 872.2,141.4 872.4,140.7 872.7,140.1 872.9,139.6 873.2,139.2 873.4,138.9 873.7,138.7 873.9,138.5 874.2,138.5 874.5,138.5 874.7,138.7 875.0,138.9 875.2,139.2 875.5,139.6 875.7,140.1 876.0,140.7 876.2,141.4 876.5,142.1 876.8,143.0 877.0,143.9 877.3,144.9 877.5,146.0 877.8,147.2 878.0,148.5 878.3,149.9 878.5,151.3 878.8,152.8 879.0,154.4 879.3,156.1 879.6,157.9 879.8,159.7 880.1,161.6 880.3,163.6 880.6,165.7 880.8,167.8 881.1,170.0 881.3,172.3 881.6,174.6 881.9,177.0 882.1,179.5 882.4,182.0 882.6,184.6 882.9,187.2 883.1,189.9 883.4,192.7 883.6,195.5 883.9,198.4 884.1,201.3 884.4,204.2 884.7,207.3 884.9,210.3 885.2,213.4 885.4,216.5 885.7,219.7 885.9,222.9 886.2,226.1 886.4,229.4 886.7,232.7 887.0,236.0 887.2,239.3 887.5,242.7 887.7,246.0 888.0,249.4 888.2,252.8 888.5,256.3 888.7,259.7 889.0,263.1 889.2,266.6 889.5,270.0 889.8,273.4 890.0,276.9 890.3,280.3 890.5,283.7 890.8,287.2 891.0,290.6 891.3,294.0 891.5,297.3 891.8,300.7 892.0,304.0 892.3,307.3 892.6,310.6 892.8,313.9 893.1,317.1 893.3,320.3 893.6,323.5 893.8,326.6 894.1,329.7 894.3,332.7 894.6,335.7 894.9,338.7 895.1,341.6 895.4,344.5 895.6,347.3 895.9,350.1 896.1,352.8 896.4,355.4 896.6,358.0 896.9,360.5 897.1,363.0 897.4,365.4 897.7,367.7 897.9,370.0 898.2,372.2 898.4,374.3 898.7,376.4 898.9,378.4 899.2,380.3 899.4,382.1 899.7,383.9 900.0,385.6 900.2,387.2 900.5,388.7 900.7,390.1 901.0,391.5 901.2,392.8 901.5,394.0 901.7,395.1 902.0,396.1 902.2,397.0 902.5,397.9 902.8,398.6 903.0,399.3 903.3,399.9 903.5,400.4 903.8,400.8 904.0,401.1 904.3,401.3 904.5,401.5 904.8,401.5 905.1,401.5 905.3,401.3 905.6,401.1 905.8,400.8 906.1,400.4 906.3,399.9 906.6,399.3 906.8,398.6 907.1,397.9 907.4,397.0 907.6,396.1 907.9,395.1 908.1,394.0 908.4,392.8 908.6,391.5 908.9,390.1 909.1,388.7 909.4,387.2 909.6,385.6 909.9,383.9 910.2,382.1 910.4,380.3 910.7,378.4 910.9,376.4 911.2,374.3 911.4,372.2 911.7,370.0 911.9,367.7 912.2,365.4 912.5,363.0 912.7,360.5 913.0,358.0 913.2,355.4 913.5,352.8 913.7,350.1 914.0,347.3 914.2,344.5 914.5,341.6 914.7,338.7 915.0,335.8 915.3,332.7 915.5,329.7 915.8,326.6 916.0,323.5 916.3,320.3 916.5,317.1 916.8,313.9 917.0,310.6 917.3,307.3 917.5,304.0 917.8,300.7 918.1,297.3 918.3,294.0 918.6,290.6 918.8,287.2 919.1,283.7 919.3,280.3 919.6,276.9 919.8,273.4 920.1,270.0 920.4,266.6 920.6,263.1 920.9,259.7 921.1,256.3 921.4,252.8 921.6,249.4 921.9,246.0 922.1,242.7 922.4,239.3 922.6,236.0 922.9,232.7 923.2,229.4 923.4,226.1 923.7,222.9 923.9,219.7 924.2,216.5 924.4,213.4 924.7,210.3 924.9,207.3 925.2,204.3 925.5,201.3 925.7,198.4 926.0,195.5 926.2,192.7 926.5,189.9 926.7,187.2 927.0,184.6 927.2,182.0 927.5,179.5 927.8,177.0 928.0,174.6 928.3,172.3 928.5,170.0 928.8,167.8 929.0,165.7 929.3,163.6 929.5,161.6 929.8,159.7 930.0,157.9 930.3,156.1 930.6,154.4 930.8,152.8 931.1,151.3 931.3,149.9 931.6,148.5 931.8,147.2 932.1,146.0 932.3,144.9 932.6,143.9 932.9,143.0 933.1,142.1 933.4,141.4 933.6,140.7 933.9,140.1 934.1,139.6 934.4,139.2 934.6,138.9 934.9,138.7 935.1,138.5 935.4,138.5 935.7,138.5 935.9,138.7 936.2,138.9 936.4,139.2 936.7,139.6 936.9,140.1 937.2,140.7 937.4,141.4 937.7,142.1 938.0,143.0 938.2,143.9 938.5,144.9 938.7,146.0 939.0,147.2 939.2,148.5 939.5,149.9 939.7,151.3 940.0,152.8 940.2,154.4 940.5,156.1 940.8,157.9 941.0,159.7 941.3,161.6 941.5,163.6 941.8,165.7 942.0,167.8 942.3,170.0 942.5,172.3 942.8,174.6 943.0,177.0 943.3,179.5 943.6,182.0 943.8,184.6 944.1,187.2 944.3,189.9 944.6,192.7 944.8,195.5 945.1,198.4 945.3,201.3 945.6,204.2 945.9,207.3 946.1,210.3 946.4,213.4 946.6,216.5 946.9,219.7 947.1,222.9 947.4,226.1 947.6,229.4 947.9,232.7 948.1,236.0 948.4,239.3 948.7,242.7 948.9,246.0 949.2,249.4 949.4,252.8 949.7,256.3 949.9,259.7 950.2,263.1 950.4,266.6 950.7,270.0 951.0,273.4 951.2,276.9 951.5,280.3 951.7,283.7 952.0,287.2 952.2,290.6 952.5,294.0 952.7,297.3 953.0,300.7 953.2,304.0 953.5,307.3 953.8,310.6 954.0,313.9 954.3,317.1 954.5,320.3 954.8,323.5 955.0,326.6 955.3,329.7 955.5,332.7 955.8,335.7 956.1,338.7 956.3,341.6 956.6,344.5 956.8,347.3 957.1,350.1 957.3,352.8 957.6,355.4 957.8,358.0 958.1,360.5 958.4,363.0 958.6,365.4 958.9,367.7 959.1,370.0 959.4,372.2 959.6,374.3 959.9,376.4 960.1,378.4 960.4,380.3 960.6,382.1 960.9,383.9 961.2,385.6 961.4,387.2 961.7,388.7 961.9,390.1 962.2,391.5 962.4,392.8 962.7,394.0 962.9,395.1 963.2,396.1 963.5,397.0 963.7,397.9 964.0,398.6 964.2,399.3 964.5,399.9 964.7,400.4 965.0,400.8 965.2,401.1 965.5,401.3 965.7,401.5 966.0,401.5 966.3,401.5 966.5,401.3 966.8,401.1 967.0,400.8 967.3,400.4 967.5,399.9 967.8,399.3 968.0,398.6 968.3,397.9 968.5,397.0 968.8,396.1 969.1,395.1 969.3,394.0 969.6,392.8 969.8,391.5 970.1,390.1 970.3,388.7 970.6,387.2 970.8,385.6 971.1,383.9 971.4,382.1 971.6,380.3 971.9,378.4 972.1,376.4 972.4,374.3 972.6,372.2 972.9,370.0 973.1,367.7 973.4,365.4 973.6,363.0 973.9,360.5 974.2,358.0 974.4,355.4 974.7,352.8 974.9,350.1 975.2,347.3 975.4,344.5 975.7,341.6 975.9,338.7 976.2,335.8 976.5,332.7 976.7,329.7 977.0,326.6 977.2,323.5 977.5,320.3 977.7,317.1 978.0,313.9 978.2,310.6 978.5,307.3 978.8,304.0 979.0,300.7 979.3,297.3 979.5,294.0 979.8,290.6 980.0,287.2 980.3,283.7 980.5,280.3 980.8,276.9 981.0,273.4 981.3,270.0 981.6,266.6 981.8,263.1 982.1,259.7 982.3,256.3 982.6,252.8 982.8,249.4 983.1,246.0 983.3,242.7 983.6,239.3 983.9,236.0 984.1,232.7 984.4,229.4 984.6,226.1 984.9,222.9 985.1,219.7 985.4,216.5 985.6,213.4 985.9,210.3 986.1,207.3 986.4,204.3 986.7,201.3 986.9,198.4 987.2,195.5 987.4,192.7 987.7,189.9 987.9,187.2 988.2,184.6 988.4,182.0 988.7,179.5 989.0,177.0 989.2,174.6 989.5,172.3 989.7,170.0 990.0,167.8 990.2,165.7 990.5,163.6 990.7,161.6 991.0,159.7 991.2,157.9 991.5,156.1 991.8,154.4 992.0,152.8 992.3,151.3 992.5,149.9 992.8,148.5 993.0,147.2 993.3,146.0 993.5,144.9 993.8,143.9 994.0,143.0 994.3,142.1 994.6,141.4 994.8,140.7 995.1,140.1 995.3,139.6 995.6,139.2 995.8,138.9 996.1,138.7 996.3,138.5 996.6,138.5 996.9,138.5 997.1,138.7 997.4,138.9 997.6,139.2 997.9,139.6 998.1,140.1 998.4,140.7 998.6,141.4 998.9,142.1 999.2,143.0 999.4,143.9 999.7,144.9 999.9,146.0 1000.2,147.2 1000.4,148.5 1000.7,149.9 1000.9,151.3 1001.2,152.8 1001.4,154.4 1001.7,156.1 1002.0,157.9 1002.2,159.7 1002.5,161.6 1002.7,163.6 1003.0,165.7 1003.2,167.8 1003.5,170.0 1003.7,172.3 1004.0,174.6 1004.2,177.0 1004.5,179.5 1004.8,182.0 1005.0,184.6 1005.3,187.2 1005.5,189.9 1005.8,192.7 1006.0,195.5 1006.3,198.4 1006.5,201.3 1006.8,204.2 1007.1,207.3 1007.3,210.3 1007.6,213.4 1007.8,216.5 1008.1,219.7 1008.3,222.9 1008.6,226.1 1008.8,229.4 1009.1,232.7 1009.4,236.0 1009.6,239.3 1009.9,242.7 1010.1,246.0 1010.4,249.4 1010.6,252.8 1010.9,256.3 1011.1,259.7 1011.4,263.1 1011.6,266.6 1011.9,270.0 1012.2,273.4 1012.4,276.9 1012.7,280.3 1012.9,283.7 1013.2,287.2 1013.4,290.6 1013.7,294.0 1013.9,297.3 1014.2,300.7 1014.5,304.0 1014.7,307.3 1015.0,310.6 1015.2,313.9 1015.5,317.1 1015.7,320.3 1016.0,323.5 1016.2,326.6 1016.5,329.7 1016.7,332.7 1017.0,335.7 1017.3,338.7 1017.5,341.6 1017.8,344.5 1018.0,347.3 1018.3,350.1 1018.5,352.8 1018.8,355.4 1019.0,358.0 1019.3,360.5 1019.5,363.0 1019.8,365.4 1020.1,367.7 1020.3,370.0 1020.6,372.2 1020.8,374.3 1021.1,376.4 1021.3,378.4 1021.6,380.3 1021.8,382.1 1022.1,383.9 1022.4,385.6 1022.6,387.2 1022.9,388.7 1023.1,390.1 1023.4,391.5 1023.6,392.8 1023.9,394.0 1024.1,395.1 1024.4,396.1 1024.7,397.0 1024.9,397.9 1025.2,398.6 1025.4,399.3 1025.7,399.9 1025.9,400.4 1026.2,400.8 1026.4,401.1 1026.7,401.3 1026.9,401.5 1027.2,401.5 1027.5,401.5 1027.7,401.3 1028.0,401.1 1028.2,400.8 1028.5,400.4 1028.7,399.9 1029.0,399.3 1029.2,398.6 1029.5,397.9 1029.8,397.0 1030.0,396.1 1030.3,395.1 1030.5,394.0 1030.8,392.8 1031.0,391.5 1031.3,390.1 1031.5,388.7 1031.8,387.2 1032.0,385.6 1032.3,383.9 1032.6,382.1 1032.8,380.3 1033.1,378.4 1033.3,376.4 1033.6,374.3 1033.8,372.2 1034.1,370.0 1034.3,367.7 1034.6,365.4 1034.8,363.0 1035.1,360.5 1035.4,358.0 1035.6,355.4 1035.9,352.8 1036.1,350.1 1036.4,347.3 1036.6,344.5 1036.9,341.6 1037.1,338.7 1037.4,335.8 1037.7,332.7 1037.9,329.7 1038.2,326.6 1038.4,323.5 1038.7,320.3 1038.9,317.1 1039.2,313.9 1039.4,310.6 1039.7,307.3 1040.0,304.0 1040.2,300.7 1040.5,297.3 1040.7,294.0 1041.0,290.6 1041.2,287.2 1041.5,283.7 1041.7,280.3 1042.0,276.9 1042.2,273.4 1042.5,270.0 1042.8,266.6 1043.0,263.1 1043.3,259.7 1043.5,256.3 1043.8,252.8 1044.0,249.4 1044.3,246.0 1044.5,242.7 1044.8,239.3 1045.0,236.0 1045.3,232.7 1045.6,229.4 1045.8,226.1 1046.1,222.9 1046.3,219.7 1046.6,216.5 1046.8,213.4 1047.1,210.3 1047.3,207.3 1047.6,204.3 1047.9,201.3 1048.1,198.4 1048.4,195.5 1048.6,192.7 1048.9,189.9 1049.1,187.2 1049.4,184.6 1049.6,182.0 1049.9,179.5 1050.2,177.0 1050.4,174.6 1050.7,172.3 1050.9,170.0 1051.2,167.8 1051.4,165.7 1051.7,163.6 1051.9,161.6 1052.2,159.7 1052.4,157.9 1052.7,156.1 1053.0,154.4 1053.2,152.8 1053.5,151.3 1053.7,149.9 1054.0,148.5 1054.2,147.2 1054.5,146.0 1054.7,144.9 1055.0,143.9 1055.2,143.0 1055.5,142.1 1055.8,141.4 1056.0,140.7 1056.3,140.1 1056.5,139.6 1056.8,139.2 1057.0,138.9 1057.3,138.7 1057.5,138.5 1057.8,138.5 1058.1,138.5 1058.3,138.7 1058.6,138.9 1058.8,139.2 1059.1,139.6 1059.3,140.1 1059.6,140.7 1059.8,141.4 1060.1,142.1 1060.3,143.0 1060.6,143.9 1060.9,144.9 1061.1,146.0 1061.4,147.2 1061.6,148.5 1061.9,149.9 1062.1,151.3 1062.4,152.8 1062.6,154.4 1062.9,156.1 1063.2,157.9 1063.4,159.7 1063.7,161.6 1063.9,163.6 1064.2,165.7 1064.4,167.8 1064.7,170.0 1064.9,172.3 1065.2,174.6 1065.5,177.0 1065.7,179.5 1066.0,182.0 1066.2,184.6 1066.5,187.2 1066.7,189.9 1067.0,192.7 1067.2,195.5 1067.5,198.4 1067.7,201.3 1068.0,204.2 1068.3,207.3 1068.5,210.3 1068.8,213.4 1069.0,216.5 1069.3,219.7 1069.5,222.9 1069.8,226.1 1070.0,229.4 1070.3,232.7 1070.5,236.0 1070.8,239.3 1071.1,242.7 1071.3,246.0 1071.6,249.4 1071.8,252.8 1072.1,256.3 1072.3,259.7 1072.6,263.1 1072.8,266.6 1073.1,270.0 1073.4,273.4 1073.6,276.9 1073.9,280.3 1074.1,283.7 1074.4,287.2 1074.6,290.6 1074.9,294.0 1075.1,297.3 1075.4,300.7 1075.7,304.0 1075.9,307.3 1076.2,310.6 1076.4,313.9 1076.7,317.1 1076.9,320.3 1077.2,323.5 1077.4,326.6 1077.7,329.7 1077.9,332.7 1078.2,335.7 1078.5,338.7 1078.7,341.6 1079.0,344.5 1079.2,347.3 1079.5,350.1 1079.7,352.8 1080.0,355.4 1080.2,358.0 1080.5,360.5 1080.8,363.0 1081.0,365.4 1081.3,367.7 1081.5,370.0 1081.8,372.2 1082.0,374.3 1082.3,376.4 1082.5,378.4 1082.8,380.3 1083.0,382.1 1083.3,383.9 1083.6,385.6 1083.8,387.2 1084.1,388.7 1084.3,390.1 1084.6,391.5 1084.8,392.8 1085.1,394.0 1085.3,395.1 1085.6,396.1 1085.8,397.0 1086.1,397.9 1086.4,398.6 1086.6,399.3 1086.9,399.9 1087.1,400.4 1087.4,400.8 1087.6,401.1 1087.9,401.3 1088.1,401.5 1088.4,401.5 1088.7,401.5 1088.9,401.3 1089.2,401.1 1089.4,400.8 1089.7,400.4 1089.9,399.9 1090.2,399.3 1090.4,398.6 1090.7,397.9 1091.0,397.0 1091.2,396.1 1091.5,395.1 1091.7,394.0 1092.0,392.8 1092.2,391.5 1092.5,390.1 1092.7,388.7 1093.0,387.2 1093.2,385.6 1093.5,383.9 1093.8,382.1 1094.0,380.3 1094.3,378.4 1094.5,376.4 1094.8,374.3 1095.0,372.2 1095.3,370.0 1095.5,367.7 1095.8,365.4 1096.0,363.0 1096.3,360.5 1096.6,358.0 1096.8,355.4 1097.1,352.8 1097.3,350.1 1097.6,347.3 1097.8,344.5 1098.1,341.6 1098.3,338.7 1098.6,335.7 1098.9,332.7 1099.1,329.7 1099.4,326.6 1099.6,323.5 1099.9,320.3 1100.1,317.1 1100.4,313.9 1100.6,310.6 1100.9,307.3 1101.2,304.0 1101.4,300.7 1101.7,297.3 1101.9,294.0 1102.2,290.6 1102.4,287.2 1102.7,283.7 1102.9,280.3 1103.2,276.9 1103.4,273.4 1103.7,270.0 1104.0,266.6 1104.2,263.1 1104.5,259.7 1104.7,256.3 1105.0,252.8 1105.2,249.4 1105.5,246.0 1105.7,242.7 1106.0,239.3 1106.2,236.0 1106.5,232.7 1106.8,229.4 1107.0,226.1 1107.3,222.9 1107.5,219.7 1107.8,216.5 1108.0,213.4 1108.3,210.3 1108.5,207.3 1108.8,204.3 1109.1,201.3 1109.3,198.4 1109.6,195.5 1109.8,192.7 1110.1,189.9 1110.3,187.2 1110.6,184.6 1110.8,182.0 1111.1,179.5 1111.3,177.0 1111.6,174.6 1111.9,172.3 1112.1,170.0 1112.4,167.8 1112.6,165.7 1112.9,163.6 1113.1,161.6 1113.4,159.7 1113.6,157.9 1113.9,156.1 1114.2,154.4 1114.4,152.8 1114.7,151.3 1114.9,149.9 1115.2,148.5 1115.4,147.2 1115.7,146.0 1115.9,144.9 1116.2,143.9 1116.5,143.0 1116.7,142.1 1117.0,141.4 1117.2,140.7 1117.5,140.1 1117.7,139.6 1118.0,139.2 1118.2,138.9 1118.5,138.7 1118.7,138.5 1119.0,138.5 1119.3,138.5 1119.5,138.7 1119.8,138.9 1120.0,139.2 1120.3,139.6 1120.5,140.1 1120.8,140.7 1121.0,141.4 1121.3,142.1 1121.5,143.0 1121.8,143.9 1122.1,144.9 1122.3,146.0 1122.6,147.2 1122.8,148.5 1123.1,149.9 1123.3,151.3 1123.6,152.8 1123.8,154.4 1124.1,156.1 1124.4,157.9 1124.6,159.7 1124.9,161.6 1125.1,163.6 1125.4,165.7 1125.6,167.8 1125.9,170.0 1126.1,172.3 1126.4,174.6 1126.7,177.0 1126.9,179.5 1127.2,182.0 1127.4,184.6 1127.7,187.2 1127.9,189.9 1128.2,192.7 1128.4,195.5 1128.7,198.4 1128.9,201.3 1129.2,204.2 1129.5,207.3 1129.7,210.3 1130.0,213.4 1130.2,216.5 1130.5,219.7 1130.7,222.9 1131.0,226.1 1131.2,229.4 1131.5,232.7 1131.8,236.0 1132.0,239.3 1132.3,242.7 1132.5,246.0 1132.8,249.4 1133.0,252.8 1133.3,256.3 1133.5,259.7 1133.8,263.1 1134.0,266.6 1134.3,270.0 1134.6,273.4 1134.8,276.9 1135.1,280.3 1135.3,283.7 1135.6,287.2 1135.8,290.6 1136.1,294.0 1136.3,297.3 1136.6,300.7 1136.8,304.0 1137.1,307.3 1137.4,310.6 1137.6,313.9 1137.9,317.1 1138.1,320.3 1138.4,323.5 1138.6,326.6 1138.9,329.7 1139.1,332.7 1139.4,335.7 1139.7,338.7 1139.9,341.6 1140.2,344.5 1140.4,347.3 1140.7,350.1 1140.9,352.8 1141.2,355.4 1141.4,358.0 1141.7,360.5 1142.0,363.0 1142.2,365.4 1142.5,367.7 1142.7,370.0 1143.0,372.2 1143.2,374.3 1143.5,376.4 1143.7,378.4 1144.0,380.3 1144.2,382.1 1144.5,383.9 1144.8,385.6 1145.0,387.2 1145.3,388.7 1145.5,390.1 1145.8,391.5 1146.0,392.8 1146.3,394.0 1146.5,395.1 1146.8,396.1 1147.0,397.0 1147.3,397.9 1147.6,398.6 1147.8,399.3 1148.1,399.9 1148.3,400.4 1148.6,400.8 1148.8,401.1 1149.1,401.3 1149.3,401.5 1149.6,401.5 1149.9,401.5 1150.1,401.3 1150.4,401.1 1150.6,400.8 1150.9,400.4 1151.1,399.9 1151.4,399.3 1151.6,398.6 1151.9,397.9 1152.2,397.0 1152.4,396.1 1152.7,395.1 1152.9,394.0 1153.2,392.8 1153.4,391.5 1153.7,390.1 1153.9,388.7 1154.2,387.2 1154.4,385.6 1154.7,383.9 1155.0,382.1 1155.2,380.3 1155.5,378.4 1155.7,376.4 1156.0,374.3 1156.2,372.2 1156.5,370.0 1156.7,367.7 1157.0,365.4 1157.2,363.0 1157.5,360.5 1157.8,358.0 1158.0,355.4 1158.3,352.8 1158.5,350.1 1158.8,347.3 1159.0,344.5 1159.3,341.6 1159.5,338.7 1159.8,335.7 1160.1,332.7 1160.3,329.7 1160.6,326.6 1160.8,323.5 1161.1,320.3 1161.3,317.1 1161.6,313.9 1161.8,310.6 1162.1,307.3 1162.3,304.0 1162.6,300.7 1162.9,297.3 1163.1,294.0 1163.4,290.6 1163.6,287.2 1163.9,283.7 1164.1,280.3 1164.4,276.9 1164.6,273.4 1164.9,270.0 1165.2,266.6 1165.4,263.1 1165.7,259.7 1165.9,256.3 1166.2,252.8 1166.4,249.4 1166.7,246.0 1166.9,242.7 1167.2,239.3 1167.5,236.0 1167.7,232.7 1168.0,229.4 1168.2,226.1 1168.5,222.9 1168.7,219.7 1169.0,216.5 1169.2,213.4 1169.5,210.3 1169.7,207.3 1170.0,204.3 1170.3,201.3 1170.5,198.4 1170.8,195.5 1171.0,192.7 1171.3,189.9 1171.5,187.2 1171.8,184.6 1172.0,182.0 1172.3,179.5 1172.5,177.0 1172.8,174.6 1173.1,172.3 1173.3,170.0 1173.6,167.8 1173.8,165.7 1174.1,163.6 1174.3,161.6 1174.6,159.7 1174.8,157.9 1175.1,156.1 1175.4,154.4 1175.6,152.8 1175.9,151.3 1176.1,149.9 1176.4,148.5 1176.6,147.2 1176.9,146.0 1177.1,144.9 1177.4,143.9 1177.7,143.0 1177.9,142.1 1178.2,141.4 1178.4,140.7 1178.7,140.1 1178.9,139.6 1179.2,139.2 1179.4,138.9 1179.7,138.7 1179.9,138.5 1180.2,138.5 1180.5,138.5 1180.7,138.7 1181.0,138.9 1181.2,139.2 1181.5,139.6 1181.7,140.1 1182.0,140.7 1182.2,141.4 1182.5,142.1 1182.8,143.0 1183.0,143.9 1183.3,144.9 1183.5,146.0 1183.8,147.2 1184.0,148.5 1184.3,149.9 1184.5,151.3 1184.8,152.8 1185.0,154.4 1185.3,156.1 1185.6,157.9 1185.8,159.7 1186.1,161.6 1186.3,163.6 1186.6,165.7 1186.8,167.8 1187.1,170.0 1187.3,172.3 1187.6,174.6 1187.8,177.0 1188.1,179.5 1188.4,182.0 1188.6,184.6 1188.9,187.2 1189.1,189.9 1189.4,192.7 1189.6,195.5 1189.9,198.4 1190.1,201.3 1190.4,204.2 1190.7,207.3 1190.9,210.3 1191.2,213.4 1191.4,216.5 1191.7,219.7 1191.9,222.9 1192.2,226.1 1192.4,229.4 1192.7,232.7 1193.0,236.0 1193.2,239.3 1193.5,242.7 1193.7,246.0 1194.0,249.4 1194.2,252.8 1194.5,256.3 1194.7,259.7 1195.0,263.1 1195.2,266.6 1195.5,270.0 1195.8,273.4 1196.0,276.9 1196.3,280.3 1196.5,283.7 1196.8,287.2 1197.0,290.6 1197.3,294.0 1197.5,297.3 1197.8,300.7 1198.0,304.0 1198.3,307.3 1198.6,310.6 1198.8,313.9 1199.1,317.1 1199.3,320.3 1199.6,323.5 1199.8,326.6 1200.1,329.7 1200.3,332.7 1200.6,335.7 1200.9,338.7 1201.1,341.6 1201.4,344.5 1201.6,347.3 1201.9,350.1 1202.1,352.8 1202.4,355.4 1202.6,358.0 1202.9,360.5 1203.2,363.0 1203.4,365.4 1203.7,367.7 1203.9,370.0 1204.2,372.2 1204.4,374.3 1204.7,376.4 1204.9,378.4 1205.2,380.3 1205.4,382.1 1205.7,383.9 1206.0,385.6 1206.2,387.2 1206.5,388.7 1206.7,390.1 1207.0,391.5 1207.2,392.8 1207.5,394.0 1207.7,395.1 1208.0,396.1 1208.2,397.0 1208.5,397.9 1208.8,398.6 1209.0,399.3 1209.3,399.9 1209.5,400.4 1209.8,400.8 1210.0,401.1 1210.3,401.3 1210.5,401.5 1210.8,401.5 1211.1,401.5 1211.3,401.3 1211.6,401.1 1211.8,400.8 1212.1,400.4 1212.3,399.9 1212.6,399.3 1212.8,398.6 1213.1,397.9 1213.3,397.0 1213.6,396.1 1213.9,395.1 1214.1,394.0 1214.4,392.8 1214.6,391.5 1214.9,390.1 1215.1,388.7 1215.4,387.2 1215.6,385.6 1215.9,383.9 1216.2,382.1 1216.4,380.3 1216.7,378.4 1216.9,376.4 1217.2,374.3 1217.4,372.2 1217.7,370.0 1217.9,367.7 1218.2,365.4 1218.5,363.0 1218.7,360.5 1219.0,358.0 1219.2,355.4 1219.5,352.8 1219.7,350.1 1220.0,347.3 1220.2,344.5 1220.5,341.6 1220.7,338.7 1221.0,335.7 1221.3,332.7 1221.5,329.7 1221.8,326.6 1222.0,323.5 1222.3,320.3 1222.5,317.1 1222.8,313.9 1223.0,310.6 1223.3,307.3 1223.5,304.0 1223.8,300.7 1224.1,297.3 1224.3,294.0 1224.6,290.6 1224.8,287.2 1225.1,283.7 1225.3,280.3 1225.6,276.9 1225.8,273.4 1226.1,270.0 1226.4,266.6 1226.6,263.1 1226.9,259.7 1227.1,256.3 1227.4,252.8 1227.6,249.4 1227.9,246.0 1228.1,242.7 1228.4,239.3 1228.7,236.0 1228.9,232.7 1229.2,229.4 1229.4,226.1 1229.7,222.9 1229.9,219.7 1230.2,216.5 1230.4,213.4 1230.7,210.3 1230.9,207.3 1231.2,204.2 1231.5,201.3 1231.7,198.4 1232.0,195.5 1232.2,192.7 1232.5,189.9 1232.7,187.2 1233.0,184.6 1233.2,182.0 1233.5,179.5 1233.8,177.0 1234.0,174.6 1234.3,172.3 1234.5,170.0 1234.8,167.8 1235.0,165.7 1235.3,163.6 1235.5,161.6 1235.8,159.7 1236.0,157.9 1236.3,156.1 1236.6,154.4 1236.8,152.8 1237.1,151.3 1237.3,149.9 1237.6,148.5 1237.8,147.2 1238.1,146.0 1238.3,144.9 1238.6,143.9 1238.9,143.0 1239.1,142.1 1239.4,141.4 1239.6,140.7 1239.9,140.1 1240.1,139.6 1240.4,139.2 1240.6,138.9 1240.9,138.7 1241.1,138.5 1241.4,138.5 1241.7,138.5 1241.9,138.7 1242.2,138.9 1242.4,139.2 1242.7,139.6 1242.9,140.1 1243.2,140.7 1243.4,141.4 1243.7,142.1 1244.0,143.0 1244.2,143.9 1244.5,144.9 1244.7,146.0 1245.0,147.2 1245.2,148.5 1245.5,149.9 1245.7,151.3 1246.0,152.8 1246.2,154.4 1246.5,156.1 1246.8,157.9 1247.0,159.7 1247.3,161.6 1247.5,163.6 1247.8,165.7 1248.0,167.8 1248.3,170.0 1248.5,172.3 1248.8,174.6 1249.1,177.0 1249.3,179.5 1249.6,182.0 1249.8,184.6 1250.1,187.2 1250.3,189.9 1250.6,192.7 1250.8,195.5 1251.1,198.4 1251.3,201.3 1251.6,204.2 1251.9,207.3 1252.1,210.3 1252.4,213.4 1252.6,216.5 1252.9,219.7 1253.1,222.9 1253.4,226.1 1253.6,229.4 1253.9,232.7 1254.2,236.0 1254.4,239.3 1254.7,242.7 1254.9,246.0 1255.2,249.4 1255.4,252.8 1255.7,256.3 1255.9,259.7 1256.2,263.1 1256.4,266.6 1256.7,270.0 1257.0,273.4 1257.2,276.9 1257.5,280.3 1257.7,283.7 1258.0,287.2 1258.2,290.6 1258.5,294.0 1258.7,297.3 1259.0,300.7 1259.2,304.0 1259.5,307.3 1259.8,310.6 1260.0,313.9 1260.3,317.1 1260.5,320.3 1260.8,323.5 1261.0,326.6 1261.3,329.7 1261.5,332.7 1261.8,335.8 1262.1,338.7 1262.3,341.6 1262.6,344.5 1262.8,347.3 1263.1,350.1 1263.3,352.8 1263.6,355.4 1263.8,358.0 1264.1,360.5 1264.3,363.0 1264.6,365.4 1264.9,367.7 1265.1,370.0 1265.4,372.2 1265.6,374.3 1265.9,376.4 1266.1,378.4 1266.4,380.3 1266.6,382.1 1266.9,383.9 1267.2,385.6 1267.4,387.2 1267.7,388.7 1267.9,390.1 1268.2,391.5 1268.4,392.8 1268.7,394.0 1268.9,395.1 1269.2,396.1 1269.5,397.0 1269.7,397.9 1270.0,398.6 1270.2,399.3 1270.5,399.9 1270.7,400.4 1271.0,400.8 1271.2,401.1 1271.5,401.3 1271.7,401.5 1272.0,401.5 1272.3,401.5 1272.5,401.3 1272.8,401.1 1273.0,400.8 1273.3,400.4 1273.5,399.9 1273.8,399.3 1274.0,398.6 1274.3,397.9 1274.5,397.0 1274.8,396.1 1275.1,395.1 1275.3,394.0 1275.6,392.8 1275.8,391.5 1276.1,390.1 1276.3,388.7 1276.6,387.2 1276.8,385.6 1277.1,383.9 1277.4,382.1 1277.6,380.3 1277.9,378.4 1278.1,376.4 1278.4,374.3 1278.6,372.2 1278.9,370.0 1279.1,367.7 1279.4,365.4 1279.7,363.0 1279.9,360.5 1280.2,358.0 1280.4,355.4 1280.7,352.8 1280.9,350.1 1281.2,347.3 1281.4,344.5 1281.7,341.6 1281.9,338.7 1282.2,335.8 1282.5,332.7 1282.7,329.7 1283.0,326.6 1283.2,323.5 1283.5,320.3 1283.7,317.1 1284.0,313.9 1284.2,310.6 1284.5,307.3 1284.8,304.0 1285.0,300.7 1285.3,297.3 1285.5,294.0 1285.8,290.6 1286.0,287.2 1286.3,283.7 1286.5,280.3 1286.8,276.9 1287.0,273.4 1287.3,270.0 1287.6,266.6 1287.8,263.1 1288.1,259.7 1288.3,256.3 1288.6,252.8 1288.8,249.4 1289.1,246.0 1289.3,242.7 1289.6,239.3 1289.8,236.0 1290.1,232.7 1290.4,229.4 1290.6,226.1 1290.9,222.9 1291.1,219.7 1291.4,216.5 1291.6,213.4 1291.9,210.3 1292.1,207.3 1292.4,204.2 1292.7,201.3 1292.9,198.4 1293.2,195.5 1293.4,192.7 1293.7,189.9 1293.9,187.2 1294.2,184.6 1294.4,182.0 1294.7,179.5 1295.0,177.0 1295.2,174.6 1295.5,172.3 1295.7,170.0 1296.0,167.8 1296.2,165.7 1296.5,163.6 1296.7,161.6 1297.0,159.7 1297.2,157.9 1297.5,156.1 1297.8,154.4 1298.0,152.8 1298.3,151.3 1298.5,149.9 1298.8,148.5 1299.0,147.2 1299.3,146.0 1299.5,144.9 1299.8,143.9 1300.1,143.0 1300.3,142.1 1300.6,141.4 1300.8,140.7 1301.1,140.1 1301.3,139.6 1301.6,139.2 1301.8,138.9 1302.1,138.7 1302.3,138.5 1302.6,138.5 1302.9,138.5 1303.1,138.7 1303.4,138.9 1303.6,139.2 1303.9,139.6 1304.1,140.1 1304.4,140.7 1304.6,141.4 1304.9,142.1 1305.2,143.0 1305.4,143.9 1305.7,144.9 1305.9,146.0 1306.2,147.2 1306.4,148.5 1306.7,149.9 1306.9,151.3 1307.2,152.8 1307.4,154.4 1307.7,156.1 1308.0,157.9 1308.2,159.7 1308.5,161.6 1308.7,163.6 1309.0,165.7 1309.2,167.8 1309.5,170.0 1309.7,172.3 1310.0,174.6 1310.2,177.0 1310.5,179.5 1310.8,182.0 1311.0,184.6 1311.3,187.2 1311.5,189.9 1311.8,192.7 1312.0,195.5 1312.3,198.4 1312.5,201.3 1312.8,204.2 1313.1,207.3 1313.3,210.3 1313.6,213.4 1313.8,216.5 1314.1,219.7 1314.3,222.9 1314.6,226.1 1314.8,229.4 1315.1,232.7 1315.3,236.0 1315.6,239.3 1315.9,242.7 1316.1,246.0 1316.4,249.4 1316.6,252.8 1316.9,256.3 1317.1,259.7 1317.4,263.1 1317.6,266.6 1317.9,270.0 1318.2,273.4 1318.4,276.9 1318.7,280.3 1318.9,283.7 1319.2,287.2 1319.4,290.6 1319.7,294.0 1319.9,297.3 1320.2,300.7 1320.5,304.0 1320.7,307.3 1321.0,310.6 1321.2,313.9 1321.5,317.1 1321.7,320.3 1322.0,323.5 1322.2,326.6 1322.5,329.7 1322.7,332.7 1323.0,335.8 1323.3,338.7 1323.5,341.6 1323.8,344.5 1324.0,347.3 1324.3,350.1 1324.5,352.8 1324.8,355.4 1325.0,358.0 1325.3,360.5 1325.6,363.0 1325.8,365.4 1326.1,367.7 1326.3,370.0 1326.6,372.2 1326.8,374.3 1327.1,376.4 1327.3,378.4 1327.6,380.3 1327.8,382.1 1328.1,383.9 1328.4,385.6 1328.6,387.2 1328.9,388.7 1329.1,390.1 1329.4,391.5 1329.6,392.8 1329.9,394.0 1330.1,395.1 1330.4,396.1 1330.7,397.0 1330.9,397.9 1331.2,398.6 1331.4,399.3 1331.7,399.9 1331.9,400.4 1332.2,400.8 1332.4,401.1 1332.7,401.3 1332.9,401.5 1333.2,401.5 1333.5,401.5 1333.7,401.3 1334.0,401.1 1334.2,400.8 1334.5,400.4 1334.7,399.9 1335.0,399.3 1335.2,398.6 1335.5,397.9 1335.8,397.0 1336.0,396.1 1336.3,395.1 1336.5,394.0 1336.8,392.8 1337.0,391.5 1337.3,390.1 1337.5,388.7 1337.8,387.2 1338.0,385.6 1338.3,383.9 1338.6,382.1 1338.8,380.3 1339.1,378.4 1339.3,376.4 1339.6,374.3 1339.8,372.2 1340.1,370.0 1340.3,367.7 1340.6,365.4 1340.8,363.0 1341.1,360.5 1341.4,358.0 1341.6,355.4 1341.9,352.8 1342.1,350.1 1342.4,347.3 1342.6,344.5 1342.9,341.6 1343.1,338.7 1343.4,335.8 1343.7,332.7 1343.9,329.7 1344.2,326.6 1344.4,323.5 1344.7,320.3 1344.9,317.1 1345.2,313.9 1345.4,310.6 1345.7,307.3 1346.0,304.0 1346.2,300.7 1346.5,297.3 1346.7,294.0 1347.0,290.6 1347.2,287.2 1347.5,283.7 1347.7,280.3 1348.0,276.9 1348.2,273.4 1348.5,270.0" stroke="#00ff00" stroke-width="1" fill="none"/>
<path d="M736.5 525V608M737.5 606V684M738.5 600V672" stroke="#0000ff" stroke-width="1" fill="none"/>
<path d="M738.5 662L739.5 628V600L740.5 583L741.5 562L742.5 545L743.5 536L745 529.5L747 526.5L750.5 525" stroke="#0000ff" stroke-width="1" fill="none"/>
<path d="M736.5 439V525M737.5 472V525M738.5 511V522M739.5 520V525M736 524.5H1348.5" stroke="#ff0000" stroke-width="1" fill="none"/>
</svg>
<svg class="abs" style="left:0;top:0" width="1365" height="738" font-family="Liberation Sans, sans-serif" font-weight="bold" font-size="13" fill="#c0c0c0">
<text x="728.5" y="142.9" text-anchor="end">10mV</text>
<text x="728.5" y="168.9" text-anchor="end">8mV</text>
<text x="728.5" y="195.9" text-anchor="end">6mV</text>
<text x="728.5" y="221.9" text-anchor="end">4mV</text>
<text x="728.5" y="247.9" text-anchor="end">2mV</text>
<text x="728.5" y="274.9" text-anchor="end">0mV</text>
<text x="728.5" y="300.9" text-anchor="end">-2mV</text>
<text x="728.5" y="326.9" text-anchor="end">-4mV</text>
<text x="728.5" y="352.9" text-anchor="end">-6mV</text>
<text x="728.5" y="379.9" text-anchor="end">-8mV</text>
<text x="728.5" y="405.9" text-anchor="end">-10mV</text>
<text x="728.5" y="426.75" text-anchor="end">50µV</text>
<text x="728.5" y="447.25" text-anchor="end">40µV</text>
<text x="728.5" y="467.75" text-anchor="end">30µV</text>
<text x="728.5" y="488.25" text-anchor="end">20µV</text>
<text x="728.5" y="508.75" text-anchor="end">10µV</text>
<text x="728.5" y="529.25" text-anchor="end">0µV</text>
<text x="728.5" y="549.75" text-anchor="end">-10µV</text>
<text x="728.5" y="570.25" text-anchor="end">-20µV</text>
<text x="728.5" y="590.75" text-anchor="end">-30µV</text>
<text x="728.5" y="611.25" text-anchor="end">-40µV</text>
<text x="728.5" y="631.75" text-anchor="end">-50µV</text>
<text x="728.5" y="652.25" text-anchor="end">-60µV</text>
<text x="728.5" y="672.75" text-anchor="end">-70µV</text>
<text x="728.5" y="693.25" text-anchor="end">-80µV</text>
<text x="735.7" y="708.8" text-anchor="middle">0s</text>
<text x="796.9000000000001" y="708.8" text-anchor="middle">1s</text>
<text x="858.1" y="708.8" text-anchor="middle">2s</text>
<text x="919.3000000000001" y="708.8" text-anchor="middle">3s</text>
<text x="980.5" y="708.8" text-anchor="middle">4s</text>
<text x="1041.7" y="708.8" text-anchor="middle">5s</text>
<text x="1102.9" y="708.8" text-anchor="middle">6s</text>
<text x="1164.1000000000001" y="708.8" text-anchor="middle">7s</text>
<text x="1225.3" y="708.8" text-anchor="middle">8s</text>
<text x="1286.5000000000002" y="708.8" text-anchor="middle">9s</text>
<text x="1347.2" y="708.8" text-anchor="middle">10s</text>
<text x="1042" y="132.6" text-anchor="middle" fill="#00ff00">V(target)</text>
<text x="889.5" y="416.6" text-anchor="middle" fill="#0000ff">V(a)</text>
<text x="1195.5" y="416.6" text-anchor="middle" fill="#ff0000">V(b)</text>
</svg>
</body></html>
